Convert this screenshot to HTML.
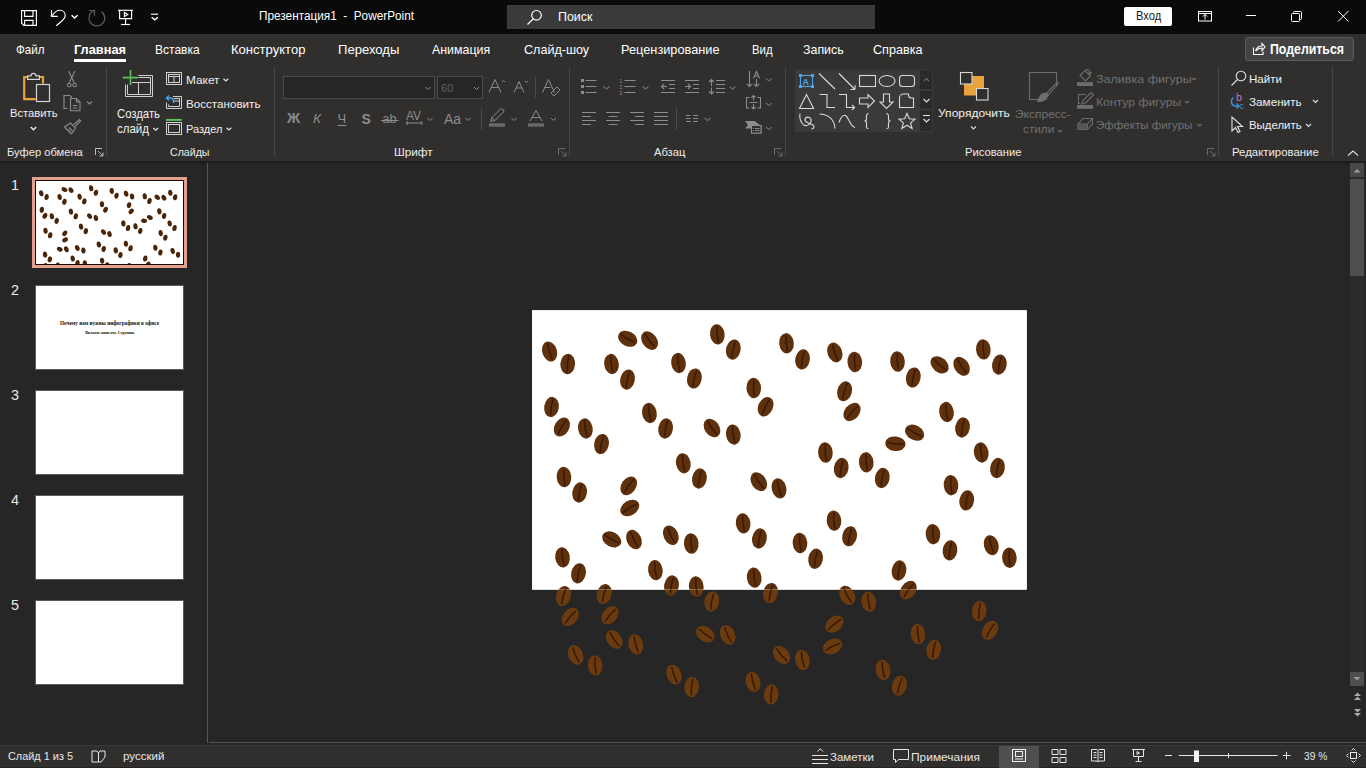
<!DOCTYPE html>
<html><head><meta charset="utf-8"><title>PowerPoint</title>
<style>
html,body{margin:0;padding:0;width:1366px;height:768px;overflow:hidden;background:#262626;font-family:"Liberation Sans",sans-serif;}
.t{position:absolute;white-space:nowrap;}
.r{position:absolute;}
svg{position:absolute;left:0;top:0;}
</style></head><body>
<div class="r" style="left:0px;top:0px;width:1366px;height:34px;background:#0a0a0a;"></div><div class="r" style="left:0px;top:162px;width:1366px;height:583px;background:#262626;"></div><div class="r" style="left:0px;top:34px;width:1366px;height:127px;background:#302f2d;"></div><div class="r" style="left:0px;top:161px;width:1366px;height:2px;background:#1d1d1d;"></div><div class="r" style="left:0px;top:163px;width:1366px;height:2px;background:#222222;"></div><div class="r" style="left:0px;top:745px;width:1366px;height:23px;background:#302f2d;"></div><div class="r" style="left:507px;top:5px;width:368px;height:24px;background:#3a3a3a;"></div><div class="r" style="left:1124px;top:7px;width:48px;height:19px;background:#ffffff;border-radius:2px"></div><div class="r" style="left:74px;top:59px;width:52px;height:3px;background:#ffffff;"></div><div class="r" style="left:1245px;top:37px;width:109px;height:24px;background:#434343;border:1px solid #5a5a5a;border-radius:3px;box-sizing:border-box"></div>
<svg width="1366" height="768" viewBox="0 0 1366 768">
<g fill="none" stroke="#ffffff" stroke-width="1.15"><path d="M21.6,10.6 h14.8 v14.8 h-12.6 l-2.2,-2.2 z"/><path d="M24.6,10.6 v5.8 h8.4 v-5.8"/><path d="M24.6,25.4 v-5 h8.4 v5"/><path d="M51.5,10 v6.4 h6.3"/><path d="M52.3,15.6 C54.5,11.8 57.5,10.2 60,10.2 C63,10.2 65.2,12.6 65.2,15.6 C65.2,18 63.5,19.6 61.5,21.3 L56.3,25.8"/><path d="M71.6,15.2 l3,2.8 l3,-2.8" stroke-width="1.5"/><path d="M118,10.3 h15"/><path d="M119.6,10.3 v8.3 h12 v-8.3"/><path d="M125.6,18.6 v5.9"/><path d="M121.1,24.5 h8.9"/><path d="M124.4,12.4 v4 l3.4,-2 z"/><path d="M151,14.2 h7"/><path d="M151.6,17.3 l3.2,2.6 l3.2,-2.6" stroke-width="1.4"/></g><g fill="none" stroke="#5c5c5c" stroke-width="1.2"><path d="M101.3,11.5 A7.9,7.9 0 1 1 94.5,10.5"/><path d="M89.1,10.5 H94.5 V15.7"/></g><g fill="none" stroke="#ffffff" stroke-width="1.2"><circle cx="536.5" cy="15.3" r="4.8"/><path d="M533,19 l-5.5,5.5"/></g><g fill="none" stroke="#ffffff" stroke-width="1"><rect x="1198.5" y="11.5" width="13" height="9.5"/><path d="M1198.5,13.5 h13"/><path d="M1205,19.5 v-5 M1202.8,16.5 l2.2,-2.2 l2.2,2.2"/><path d="M1246,15.5 h10"/><rect x="1291.5" y="13.5" width="8" height="8" rx="1"/><path d="M1293.5,13.5 v-1 a1,1 0 0 1 1,-1 h6 a1,1 0 0 1 1,1 v6 a1,1 0 0 1 -1,1 h-1"/><path d="M1338,11 l10.5,10.5 M1348.5,11 l-10.5,10.5"/></g><g fill="none" stroke="#ffffff" stroke-width="1.1"><path d="M1253.5,47.5 v7 h9.5 v-3"/><path d="M1255.5,51 c1,-3 3,-5 6.5,-5 v-2.5 l3,3.5 l-3,3.5 v-2.5 c-3,0 -4.5,1 -6.5,3"/></g><g fill="none" stroke="#e8a33d" stroke-width="2.2"><path d="M27.5,77 h-3.3 v22.2 h11.5"/><path d="M39,77 h4 v6.5"/></g><g fill="none" stroke="#d4d4d4" stroke-width="1.2"><path d="M27.6,79.4 v-3.5 h3.4 a2.5,2.5 0 0 1 5,0 h3.4 v3.5 z"/><rect x="36.5" y="84.5" width="13" height="17"/></g><path d="M30.8,127 l2.7,2.7 l2.7,-2.7" fill="none" stroke="#f0f0f0" stroke-width="1.4"/><g fill="none" stroke="#8c8c8c" stroke-width="1.1"><path d="M68.5,71 L74.3,82.8 M75,71 L69.2,82.8"/><circle cx="69.3" cy="85" r="1.8"/><circle cx="74.6" cy="85" r="1.8"/><path d="M67.5,108.5 h-3.5 v-13 h6 l2,2"/><path d="M70.5,98.5 h6 l3.5,3.5 v8.8 h-9.5 z M76.5,98.5 v3.5 h3.5"/><path d="M72.8,105.5 h4.5 M72.8,108 h4.5"/><path d="M87,101.5 l2.5,2.5 l2.5,-2.5"/><path d="M73.5,125 l6,-5.5 l1.2,1.2 l-5.5,6"/><path d="M64.5,127 l6,-4 l5,5 l-4,6 z"/><path d="M67.5,129.5 l3,3 M69,127.5 l3.5,3.5"/></g><g fill="none" stroke="#bdbdbd" stroke-width="1"><path d="M95.5,155 v-6.5 h6.5"/><path d="M98,151 l5,5 M103,152.5 v3.5 h-3.5"/></g><g fill="none" stroke="#6a6a6a" stroke-width="1"><path d="M558.5,155 v-6.5 h6.5"/><path d="M561,151 l5,5 M566,152.5 v3.5 h-3.5"/></g><g fill="none" stroke="#6a6a6a" stroke-width="1"><path d="M774.5,155 v-6.5 h6.5"/><path d="M777,151 l5,5 M782,152.5 v3.5 h-3.5"/></g><g fill="none" stroke="#6a6a6a" stroke-width="1"><path d="M1207.5,155 v-6.5 h6.5"/><path d="M1210,151 l5,5 M1215,152.5 v3.5 h-3.5"/></g><path d="M535.5,77 v20.5 M481.5,108.5 v21.5 M676.5,108 v22" stroke="#4c4c4c" stroke-width="1"/><path d="M106.5,67 V156" stroke="#464646" stroke-width="1"/><path d="M274.5,67 V156" stroke="#464646" stroke-width="1"/><path d="M569.5,67 V156" stroke="#464646" stroke-width="1"/><path d="M785.5,67 V156" stroke="#464646" stroke-width="1"/><path d="M1218.5,67 V156" stroke="#464646" stroke-width="1"/><path d="M1332.5,67 V156" stroke="#464646" stroke-width="1"/><g fill="none" stroke="#d0d0d0" stroke-width="1"><path d="M138.5,75.5 h14 v21 h-27 v-12"/><path d="M138.5,77.5 h12 v17 h-23 v-10"/><path d="M132,82.5 h18.5 M138.5,82.5 v12.5"/><rect x="166.5" y="72.5" width="15" height="12"/><rect x="168.5" y="74.5" width="11" height="8"/><path d="M168.5,76.5 h11 M174,76.5 v6.5"/><path d="M173,96.5 h8.5 v12 h-15 v-6"/><path d="M174,98.5 h5.5 v8 h-11 v-2"/><path d="M174,101 h5.5"/><rect x="166.5" y="122.5" width="15" height="12"/><rect x="168.5" y="124.5" width="11" height="8"/></g><path d="M130.5,70 v15 M122.8,77.6 h15.3" stroke="#5cc15c" stroke-width="1.6"/><path d="M153.3,128 l2.4,2.2 l2.4,-2.2" fill="none" stroke="#e0e0e0" stroke-width="1.2"/><path d="M169,95.5 l-2.5,2.5 l2.5,2.5 M167,98 h3.5 a3,3 0 0 1 3,3 v2" fill="none" stroke="#4aa3e8" stroke-width="1.5"/><path d="M166,119.9 h15.7" stroke="#5cc15c" stroke-width="2"/><path d="M223.5,78.8 l2.4,2.2 l2.4,-2.2 M226.5,127.8 l2.4,2.2 l2.4,-2.2" fill="none" stroke="#e0e0e0" stroke-width="1.2"/><rect x="283.5" y="76.5" width="151" height="22" fill="#262626" stroke="#4a4a4a"/><rect x="437.5" y="76.5" width="45" height="22" fill="#262626" stroke="#4a4a4a"/><g fill="none" stroke="#8c8c8c" stroke-width="1"><path d="M425.5,87 l2.5,2.5 l2.5,-2.5 M474,87 l2.5,2.5 l2.5,-2.5"/><path d="M489,92.5 l6,-13 l6,13 M491.5,87.5 h7 M502,82 l1.5,-1.5 l1.5,1.5"/><path d="M514,92.5 l5,-11 l5,11 M516,88 h6 M525,81 l1.5,1.5 l1.5,-1.5"/><path d="M542.5,92.5 l6,-13 l6,13 M544.5,87.5 h6 M551,93 l6,-6 l3,3 l-6,6 z"/><path d="M427.5,118 l2.5,2.5 l2.5,-2.5 M465.5,118 l2.5,2.5 l2.5,-2.5 M511.5,118 l2.5,2.5 l2.5,-2.5 M551,118 l2.5,2.5 l2.5,-2.5"/><path d="M337.5,125.5 h9"/><path d="M381,120.5 h17.5"/><path d="M406,123 h16.5 M408,121 l-2,2 l2,2 M420.5,121 l2,2 l-2,2"/><path d="M490.5,121.5 l1.5,-4 l8.5,-8.5 a1.5,1.5 0 0 1 2,0 l1,1 a1.5,1.5 0 0 1 0,2 l-8.5,8.5 z M492,117.5 l3,3"/><path d="M530,121 l6,-10.5 l6,10.5 M532,117.5 h8"/></g><rect x="489" y="123.3" width="16" height="3.4" fill="#6a6a6a"/><rect x="528" y="123.3" width="16" height="3.4" fill="#6a6a6a"/><g font-family="Liberation Sans" fill="#8c8c8c"><text x="287" y="123.2" font-size="14.5" font-weight="700">Ж</text><text x="313" y="123.2" font-size="13.5" font-style="italic">К</text><text x="337.5" y="122.8" font-size="13">Ч</text><text x="361.5" y="123.5" font-size="14" font-weight="700">S</text><text x="382.5" y="123.3" font-size="12.5">ab</text><text x="406" y="119.8" font-size="12">AV</text><text x="444" y="124" font-size="14">Aa</text></g><g fill="none" stroke="#8c8c8c" stroke-width="1.1"><path d="M585.5,80.5 h11 M585.5,86.5 h11 M585.5,92.5 h11"/><path d="M624.5,80.5 h11 M624.5,86.5 h11 M624.5,92.5 h11"/><path d="M661,80.5 h14 M669,84.5 h6 M669,88.5 h6 M661,92.5 h14 M667,86.5 h-5.5 M664,84 l-2.5,2.5 l2.5,2.5"/><path d="M685,80.5 h14 M693,84.5 h6 M693,88.5 h6 M685,92.5 h14 M685,86.5 h5.5 M688,84 l2.5,2.5 l-2.5,2.5"/><path d="M716,80.5 h9 M716,84.5 h9 M716,88.5 h9 M716,92.5 h9 M711.5,79.5 v6.5 M709,82 l2.5,-2.5 l2.5,2.5 M711.5,87.5 v6.5 M709,91.5 l2.5,2.5 l2.5,-2.5"/><path d="M603.5,86.5 l3,2.5 l3,-2.5 M642.5,86.5 l3,2.5 l3,-2.5 M729.5,86.5 l3,2.5 l3,-2.5 M704.5,118 l3,2.5 l3,-2.5" stroke="#6e6e6e"/><path d="M749.5,71 v15.5 M746.8,83.8 l2.7,2.7 l2.7,-2.7 M756.5,79 v7.5 M753.8,83.8 l2.7,2.7 l2.7,-2.7 M753.5,78.5 l3,-7 l3,7 M754.5,76 h4"/><path d="M766,78.5 l3,2.5 l3,-2.5 M766,103 l3,2.5 l3,-2.5 M766,127 l3,2.5 l3,-2.5" stroke="#6a6a6a"/><path d="M749.5,97.5 h-3 v10.5 h3 M757.5,97.5 h3 v10.5 h-3 M749.5,102.5 h8 M753.5,95.5 v5 M751.5,97.5 l2,-2 l2,2 M753.5,104 v5 M751.5,107 l2,2 l2,-2"/><rect x="751.5" y="125.5" width="9.5" height="7.5"/><path d="M755,128.5 h4.5 M755,130.5 h4.5 M753,128.5 h1 M753,130.5 h1"/><path d="M582,112.5 h14 M582,116.5 h9 M582,120.5 h14 M582,124.5 h9"/><path d="M606,112.5 h14 M608.5,116.5 h9 M606,120.5 h14 M608.5,124.5 h9"/><path d="M630,112.5 h14 M635,116.5 h9 M630,120.5 h14 M635,124.5 h9"/><path d="M654,112.5 h14 M654,116.5 h14 M654,120.5 h14 M654,124.5 h14"/><path d="M686,115.5 h4.5 M686,118.5 h4.5 M686,121.5 h4.5 M693,115.5 h5 M693,118.5 h5 M693,121.5 h5"/></g><g fill="#8c8c8c"><rect x="581" y="79" width="3" height="3"/><rect x="581" y="85" width="3" height="3"/><rect x="581" y="91" width="3" height="3"/><path d="M745,121 h9.5 l5.5,4 h-8.5 v3.5 h-6.5 l3,-3.5 z"/><rect x="751.5" y="125.5" width="9.5" height="7.5" fill="#302f2d" stroke="#8c8c8c"/><path d="M755,128.5 h4.5 M755,130.5 h4.5 M753,128.5 h1 M753,130.5 h1" stroke="#8c8c8c"/></g><g fill="#8c8c8c" font-family="Liberation Sans" font-size="5"><text x="619.5" y="82.5">1</text><text x="619.5" y="88.5">2</text><text x="619.5" y="94.5">3</text></g><rect x="795" y="69.5" width="124" height="62.5" fill="#3a3a3a"/><rect x="919" y="69.5" width="14" height="62.5" fill="#3a3a3a"/><rect x="920" y="70.5" width="12" height="18.5" fill="#2a2a2a"/><rect x="920" y="91" width="12" height="17.5" fill="#2a2a2a"/><rect x="920" y="110.5" width="12" height="20.5" fill="#2a2a2a"/><g fill="none" stroke-width="1.1"><path d="M924,81 l2.5,-2.5 l2.5,2.5" stroke="#6a6a6a"/><path d="M923.5,99 l3,3 l3,-3" stroke="#e0e0e0"/><path d="M923,115.5 h7 M923.5,119 l3,3 l3,-3" stroke="#e0e0e0"/></g><g fill="none" stroke="#d8d8d8" stroke-width="1.1"><path d="M819,73.5 l16,15.5 M839,73.5 l15.5,15.5 M855,89.5 h-4.5 M855,89.5 v-4.5"/><rect x="859.5" y="75.5" width="16" height="11"/><ellipse cx="887" cy="81" rx="8" ry="5.5"/><rect x="899.5" y="75.5" width="15" height="11" rx="3"/><path d="M799.5,108.5 l7,-14 l7,14 z"/><path d="M819.5,94.5 h7.5 v13 h8"/><path d="M839,94.5 h7.5 v13 h8 M852,105 l2.5,2.5 l-2.5,2.5"/><path d="M859.5,98 h8.5 v-3.5 l6.5,6.5 l-6.5,6.5 v-3.5 h-8.5 z"/><path d="M883.5,94 h6 v8 h3.5 l-6.5,6.5 l-6.5,-6.5 h3.5 z"/><path d="M899.5,107.5 v-9.5 a4,4 0 0 1 4,-4 h5 l0,1 a3,3 0 0 0 3,3 h2 v9.5 z"/><path d="M800,113.5 C799,118 801,123 804,125 C807,127 812,123 811,119.5 C810,116 805,116.5 805,120 C805,123 811,123.5 813,125 C815,126.5 814,129 811.5,129"/><path d="M819.5,114 c8,0 15,5 15.5,14.5"/><path d="M839,122.5 c1.5,-5 4,-8 6.5,-7 c3,1.5 4.5,11 9.5,12"/><path d="M868.5,113.5 c-2,0 -2,1 -2,3 v2.5 c0,1 -1,2 -2,2 c1,0 2,1 2,2 v3 c0,2 0,2.5 2,2.5"/><path d="M886.5,113.5 c2,0 2,1 2,3 v2.5 c0,1 1,2 2,2 c-1,0 -2,1 -2,2 v3 c0,2 0,2.5 -2,2.5"/><path d="M907,113.5 l2.3,5.3 l5.7,0.4 l-4.4,3.7 l1.5,5.6 l-5.1,-3.3 l-5.1,3.3 l1.5,-5.6 l-4.4,-3.7 l5.7,-0.4 z"/></g><g fill="none" stroke="#4aa3e8" stroke-width="1.1"><rect x="800.5" y="75.5" width="12" height="11"/></g><g fill="#4aa3e8"><rect x="799" y="74" width="3" height="3"/><rect x="811" y="74" width="3" height="3"/><rect x="799" y="85" width="3" height="3"/><rect x="811" y="85" width="3" height="3"/><text x="802.5" y="85" font-family="Liberation Sans" font-size="9" font-weight="700">A</text></g><rect x="964" y="76" width="20" height="19.5" fill="#e8a33d"/><g fill="#2e2e2e" stroke="#d8d8d8" stroke-width="1.1"><rect x="960.5" y="72.5" width="11.5" height="11.5"/><rect x="976.5" y="88.5" width="11.5" height="11.5"/></g><path d="M971,126.5 l2.5,2.5 l2.5,-2.5" fill="none" stroke="#e0e0e0" stroke-width="1.1"/><g fill="none" stroke="#6e6e6e" stroke-width="1.1"><path d="M1045,99.5 h-15.5 v-27 h27 v14"/><path d="M1056.5,83 c1,-1 2.5,0 1.5,1 l-9.5,11 l-2,-1.5 z"/><path d="M1046.5,93.5 c-3,-1 -6,1 -7,4 l-2,4 c3,0 7,-1 9,-3 l1.5,-3.5" fill="#6e6e6e"/><path d="M1058,130 l2,2 l2,-2 M1192,78 l2,2 l2,-2 M1185,101 l2,2 l2,-2 M1197.5,124 l2,2 l2,-2"/><path d="M1080,75.5 l5,-5 l5.5,5.5 l-5,5 z"/><path d="M1085.5,70.5 l1,-1 c2,0 3.5,1 3.5,3 v2 M1090,74 l1.5,-1.5 M1090,74 l-1.5,-1.2"/><path d="M1086,94.5 h-7.5 v9 h2"/><path d="M1082,104 l1,-3.5 l8,-8 l2.5,2.5 l-8,8 z"/><path d="M1078,124 l5,-5.5 h9.5 l0,5.5 l-5,5.5 h-9.5 z M1078,124 h9.5 l5,-5.5 M1087.5,124 v5.5"/></g><rect x="1077" y="82.2" width="16" height="3.8" fill="#6e6e6e"/><rect x="1077" y="105" width="16" height="3.8" fill="#6e6e6e"/><path d="M1078.5,124.5 h9 v5 h-9 z" fill="#555"/><g fill="none" stroke="#e0e0e0" stroke-width="1.1"><circle cx="1241" cy="76" r="4.8"/><path d="M1237.5,79.5 l-6,6"/><path d="M1232,117 v14 l3.5,-3.5 l2.5,5 l2,-1 l-2.5,-5 h5 z"/><path d="M1313,100 l2.5,2.5 l2.5,-2.5 M1306,124 l2.5,2.5 l2.5,-2.5"/><path d="M1348,155.5 l5,-4.5 l5,4.5"/></g><g fill="none" stroke="#3d8fd1" stroke-width="1.4"><path d="M1233.5,97.5 c-3,2 -3,7.5 1.5,8.5 h3 M1236.5,103.5 l2.5,2.5 l-2.5,2.5"/></g><text x="1236" y="101.3" font-family="Liberation Sans" font-size="10.5" fill="#c774c6">b</text><text x="1239.3" y="108.8" font-family="Liberation Sans" font-size="9.5" fill="#3d8fd1">c</text><path d="M207.5,163 V743" stroke="#555555" stroke-width="1"/><path d="M209,742.5 H1366" stroke="#555555" stroke-width="1"/><rect x="0" y="745" width="1366" height="1" fill="#3a3a3a"/><rect x="0" y="767" width="1366" height="1" fill="#222222"/><rect x="1350" y="163" width="14" height="523" fill="#2b2b2b"/><rect x="1350" y="163" width="14" height="14" fill="#474747"/><path d="M1353.5,172.5 l3.5,-3.5 l3.5,3.5 z" fill="#9a9a9a"/><rect x="1350" y="179" width="14" height="97" fill="#4f4f4f"/><rect x="1350" y="672" width="14" height="14" fill="#4e4e4e"/><path d="M1353.5,677 l3.5,3.5 l3.5,-3.5 z" fill="#9a9a9a"/><g fill="#a8a8a8"><path d="M1354,696 l3.5,-3.5 l3.5,3.5 z M1354,700 l3.5,-3.5 l3.5,3.5 z"/><path d="M1354,709 l3.5,3.5 l3.5,-3.5 z M1354,713 l3.5,3.5 l3.5,-3.5 z"/></g><g fill="none" stroke="#e6e6e6" stroke-width="1"><path d="M92,751 h5 l1.5,2 l1.5,-2 h5 v6 l-4,5 h-9 z M98.5,753 v9"/><path d="M812,755.5 h16 M812,759.5 h16 M812,763.5 h16 M817.5,751.5 l2.8,-2.8 l2.8,2.8"/><path d="M893.5,749.5 h15 v10 h-10 l-3,3 v-3 h-2 z"/><path d="M1052,749.5 h6 v5 h-6 z M1060,749.5 h6 v5 h-6 z M1052,757.5 h6 v5 h-6 z M1060,757.5 h6 v5 h-6 z"/><path d="M1091.5,749.5 h5.5 l1,1 l1,-1 h5.5 v11.5 h-5.5 l-1,1 l-1,-1 h-5.5 z M1098,750.5 v11"/><path d="M1093.5,752.5 h3 M1093.5,755 h3 M1093.5,757.5 h3 M1099.5,752.5 h3 M1099.5,755 h3 M1099.5,757.5 h3"/><path d="M1132,749.5 h13 M1133.5,749.5 v7 h10 v-7 M1138.5,756.5 v4.5 M1135.5,761.5 h6 M1137,751.5 v3 l2.5,-1.5 z"/><path d="M1165,755.5 h7 M1283,755.5 h7.5 M1286.5,751.8 v7.5"/><rect x="1350.5" y="752.5" width="6" height="6"/><path d="M1351.5,750.5 l2,-2 l2,2 M1351.5,760.5 l2,2 l2,-2 M1348.5,753.5 l-2,2 l2,2 M1358.5,753.5 l2,2 l-2,2"/></g><rect x="999" y="746" width="40" height="22" fill="#4f4f4f"/><g fill="none" stroke="#f0f0f0" stroke-width="1"><rect x="1012.5" y="749.5" width="13" height="12"/><rect x="1015.5" y="751.5" width="7" height="5"/><path d="M1015,759 h8"/></g><path d="M1178.8,755.5 H1277.6" stroke="#e4e4e4" stroke-width="1"/><path d="M1228.5,753 v5" stroke="#e4e4e4"/><rect x="1194" y="750.5" width="5" height="11.5" fill="#f4f4f4"/><rect x="33.5" y="178.5" width="152" height="88" fill="none" stroke="#e59f8f" stroke-width="3"/><rect x="35" y="180" width="149" height="85" fill="#1a0a05"/><rect x="36" y="181" width="147" height="83" fill="#ffffff"/><rect x="36" y="286" width="147" height="83" fill="#ffffff"/><rect x="36" y="391" width="147" height="83" fill="#ffffff"/><rect x="36" y="496" width="147" height="83" fill="#ffffff"/><rect x="36" y="601" width="147" height="83" fill="#ffffff"/><rect x="35.5" y="285.5" width="148" height="84" fill="none" stroke="#5a5a5a" stroke-width="1"/><rect x="35.5" y="390.5" width="148" height="84" fill="none" stroke="#5a5a5a" stroke-width="1"/><rect x="35.5" y="495.5" width="148" height="84" fill="none" stroke="#5a5a5a" stroke-width="1"/><rect x="35.5" y="600.5" width="148" height="84" fill="none" stroke="#5a5a5a" stroke-width="1"/><text x="60" y="324.6" textLength="99" lengthAdjust="spacingAndGlyphs" font-family="Liberation Serif" font-size="5.4" font-weight="700" fill="#111">Почему нам нужны инфографики в офисе</text><text x="85.2" y="333.6" textLength="49" lengthAdjust="spacingAndGlyphs" font-family="Liberation Serif" font-size="5" font-weight="700" fill="#111">Вильям записать 3 группы</text><defs><clipPath id="cs"><rect x="532.2" y="310.3" width="494.5" height="279.3"/></clipPath><clipPath id="ct"><rect x="36" y="181" width="147" height="83"/></clipPath><g id="beans"><g transform="translate(549.6,351.5) rotate(-18)"><ellipse rx="7.3" ry="10.2" fill="currentColor"/><path d="M0.5,-8.3 Q-0.9,0 0.3,8.3" fill="none" stroke="#2e1503" stroke-width="1.5"/></g><g transform="translate(567.7,364) rotate(5)"><ellipse rx="7.3" ry="10.2" fill="currentColor"/><path d="M0.5,-8.3 Q-0.9,0 0.3,8.3" fill="none" stroke="#2e1503" stroke-width="1.5"/></g><g transform="translate(627.7,338.8) rotate(-62)"><ellipse rx="7.3" ry="10.2" fill="currentColor"/><path d="M0.5,-8.3 Q-0.9,0 0.3,8.3" fill="none" stroke="#2e1503" stroke-width="1.5"/></g><g transform="translate(649.6,340.6) rotate(-37)"><ellipse rx="7.3" ry="10.2" fill="currentColor"/><path d="M0.5,-8.3 Q-0.9,0 0.3,8.3" fill="none" stroke="#2e1503" stroke-width="1.5"/></g><g transform="translate(611.5,364) rotate(-8)"><ellipse rx="7.3" ry="10.2" fill="currentColor"/><path d="M0.5,-8.3 Q-0.9,0 0.3,8.3" fill="none" stroke="#2e1503" stroke-width="1.5"/></g><g transform="translate(627.5,379.6) rotate(12)"><ellipse rx="7.3" ry="10.2" fill="currentColor"/><path d="M0.5,-8.3 Q-0.9,0 0.3,8.3" fill="none" stroke="#2e1503" stroke-width="1.5"/></g><g transform="translate(717.3,334.4) rotate(-8)"><ellipse rx="7.3" ry="10.2" fill="currentColor"/><path d="M0.5,-8.3 Q-0.9,0 0.3,8.3" fill="none" stroke="#2e1503" stroke-width="1.5"/></g><g transform="translate(733.3,349.6) rotate(12)"><ellipse rx="7.3" ry="10.2" fill="currentColor"/><path d="M0.5,-8.3 Q-0.9,0 0.3,8.3" fill="none" stroke="#2e1503" stroke-width="1.5"/></g><g transform="translate(678.5,363) rotate(-8)"><ellipse rx="7.3" ry="10.2" fill="currentColor"/><path d="M0.5,-8.3 Q-0.9,0 0.3,8.3" fill="none" stroke="#2e1503" stroke-width="1.5"/></g><g transform="translate(694.4,378.5) rotate(12)"><ellipse rx="7.3" ry="10.2" fill="currentColor"/><path d="M0.5,-8.3 Q-0.9,0 0.3,8.3" fill="none" stroke="#2e1503" stroke-width="1.5"/></g><g transform="translate(753.75,388) rotate(-3)"><ellipse rx="7.3" ry="10.2" fill="currentColor"/><path d="M0.5,-8.3 Q-0.9,0 0.3,8.3" fill="none" stroke="#2e1503" stroke-width="1.5"/></g><g transform="translate(765.6,406.7) rotate(25)"><ellipse rx="7.3" ry="10.2" fill="currentColor"/><path d="M0.5,-8.3 Q-0.9,0 0.3,8.3" fill="none" stroke="#2e1503" stroke-width="1.5"/></g><g transform="translate(551.5,407) rotate(8)"><ellipse rx="7.3" ry="10.2" fill="currentColor"/><path d="M0.5,-8.3 Q-0.9,0 0.3,8.3" fill="none" stroke="#2e1503" stroke-width="1.5"/></g><g transform="translate(561.9,427) rotate(30)"><ellipse rx="7.3" ry="10.2" fill="currentColor"/><path d="M0.5,-8.3 Q-0.9,0 0.3,8.3" fill="none" stroke="#2e1503" stroke-width="1.5"/></g><g transform="translate(585.4,428.5) rotate(-10)"><ellipse rx="7.3" ry="10.2" fill="currentColor"/><path d="M0.5,-8.3 Q-0.9,0 0.3,8.3" fill="none" stroke="#2e1503" stroke-width="1.5"/></g><g transform="translate(601.5,444) rotate(12)"><ellipse rx="7.3" ry="10.2" fill="currentColor"/><path d="M0.5,-8.3 Q-0.9,0 0.3,8.3" fill="none" stroke="#2e1503" stroke-width="1.5"/></g><g transform="translate(649.4,413) rotate(-10)"><ellipse rx="7.3" ry="10.2" fill="currentColor"/><path d="M0.5,-8.3 Q-0.9,0 0.3,8.3" fill="none" stroke="#2e1503" stroke-width="1.5"/></g><g transform="translate(665.6,428.5) rotate(10)"><ellipse rx="7.3" ry="10.2" fill="currentColor"/><path d="M0.5,-8.3 Q-0.9,0 0.3,8.3" fill="none" stroke="#2e1503" stroke-width="1.5"/></g><g transform="translate(712,428) rotate(-35)"><ellipse rx="7.3" ry="10.2" fill="currentColor"/><path d="M0.5,-8.3 Q-0.9,0 0.3,8.3" fill="none" stroke="#2e1503" stroke-width="1.5"/></g><g transform="translate(733.3,434.6) rotate(-10)"><ellipse rx="7.3" ry="10.2" fill="currentColor"/><path d="M0.5,-8.3 Q-0.9,0 0.3,8.3" fill="none" stroke="#2e1503" stroke-width="1.5"/></g><g transform="translate(786.5,343.3) rotate(-5)"><ellipse rx="7.3" ry="10.2" fill="currentColor"/><path d="M0.5,-8.3 Q-0.9,0 0.3,8.3" fill="none" stroke="#2e1503" stroke-width="1.5"/></g><g transform="translate(802.5,359.4) rotate(10)"><ellipse rx="7.3" ry="10.2" fill="currentColor"/><path d="M0.5,-8.3 Q-0.9,0 0.3,8.3" fill="none" stroke="#2e1503" stroke-width="1.5"/></g><g transform="translate(834.8,352.5) rotate(-20)"><ellipse rx="7.3" ry="10.2" fill="currentColor"/><path d="M0.5,-8.3 Q-0.9,0 0.3,8.3" fill="none" stroke="#2e1503" stroke-width="1.5"/></g><g transform="translate(854.8,362) rotate(-5)"><ellipse rx="7.3" ry="10.2" fill="currentColor"/><path d="M0.5,-8.3 Q-0.9,0 0.3,8.3" fill="none" stroke="#2e1503" stroke-width="1.5"/></g><g transform="translate(897.5,361.5) rotate(-5)"><ellipse rx="7.3" ry="10.2" fill="currentColor"/><path d="M0.5,-8.3 Q-0.9,0 0.3,8.3" fill="none" stroke="#2e1503" stroke-width="1.5"/></g><g transform="translate(913.3,377.5) rotate(12)"><ellipse rx="7.3" ry="10.2" fill="currentColor"/><path d="M0.5,-8.3 Q-0.9,0 0.3,8.3" fill="none" stroke="#2e1503" stroke-width="1.5"/></g><g transform="translate(939.6,364.8) rotate(-50)"><ellipse rx="7.3" ry="10.2" fill="currentColor"/><path d="M0.5,-8.3 Q-0.9,0 0.3,8.3" fill="none" stroke="#2e1503" stroke-width="1.5"/></g><g transform="translate(961.6,366.3) rotate(-33)"><ellipse rx="7.3" ry="10.2" fill="currentColor"/><path d="M0.5,-8.3 Q-0.9,0 0.3,8.3" fill="none" stroke="#2e1503" stroke-width="1.5"/></g><g transform="translate(983.3,349.4) rotate(-5)"><ellipse rx="7.3" ry="10.2" fill="currentColor"/><path d="M0.5,-8.3 Q-0.9,0 0.3,8.3" fill="none" stroke="#2e1503" stroke-width="1.5"/></g><g transform="translate(999.4,364.6) rotate(10)"><ellipse rx="7.3" ry="10.2" fill="currentColor"/><path d="M0.5,-8.3 Q-0.9,0 0.3,8.3" fill="none" stroke="#2e1503" stroke-width="1.5"/></g><g transform="translate(844.6,391.25) rotate(15)"><ellipse rx="7.3" ry="10.2" fill="currentColor"/><path d="M0.5,-8.3 Q-0.9,0 0.3,8.3" fill="none" stroke="#2e1503" stroke-width="1.5"/></g><g transform="translate(852,412) rotate(40)"><ellipse rx="7.3" ry="10.2" fill="currentColor"/><path d="M0.5,-8.3 Q-0.9,0 0.3,8.3" fill="none" stroke="#2e1503" stroke-width="1.5"/></g><g transform="translate(946.5,412) rotate(-8)"><ellipse rx="7.3" ry="10.2" fill="currentColor"/><path d="M0.5,-8.3 Q-0.9,0 0.3,8.3" fill="none" stroke="#2e1503" stroke-width="1.5"/></g><g transform="translate(962.5,427.5) rotate(10)"><ellipse rx="7.3" ry="10.2" fill="currentColor"/><path d="M0.5,-8.3 Q-0.9,0 0.3,8.3" fill="none" stroke="#2e1503" stroke-width="1.5"/></g><g transform="translate(914.6,432.7) rotate(-61)"><ellipse rx="7.3" ry="10.2" fill="currentColor"/><path d="M0.5,-8.3 Q-0.9,0 0.3,8.3" fill="none" stroke="#2e1503" stroke-width="1.5"/></g><g transform="translate(895.4,443.75) rotate(-84)"><ellipse rx="7.3" ry="10.2" fill="currentColor"/><path d="M0.5,-8.3 Q-0.9,0 0.3,8.3" fill="none" stroke="#2e1503" stroke-width="1.5"/></g><g transform="translate(564,477) rotate(-5)"><ellipse rx="7.3" ry="10.2" fill="currentColor"/><path d="M0.5,-8.3 Q-0.9,0 0.3,8.3" fill="none" stroke="#2e1503" stroke-width="1.5"/></g><g transform="translate(579.6,492.5) rotate(10)"><ellipse rx="7.3" ry="10.2" fill="currentColor"/><path d="M0.5,-8.3 Q-0.9,0 0.3,8.3" fill="none" stroke="#2e1503" stroke-width="1.5"/></g><g transform="translate(628.75,485.8) rotate(35)"><ellipse rx="7.3" ry="10.2" fill="currentColor"/><path d="M0.5,-8.3 Q-0.9,0 0.3,8.3" fill="none" stroke="#2e1503" stroke-width="1.5"/></g><g transform="translate(629.8,508) rotate(58)"><ellipse rx="7.3" ry="10.2" fill="currentColor"/><path d="M0.5,-8.3 Q-0.9,0 0.3,8.3" fill="none" stroke="#2e1503" stroke-width="1.5"/></g><g transform="translate(683.3,463.3) rotate(-10)"><ellipse rx="7.3" ry="10.2" fill="currentColor"/><path d="M0.5,-8.3 Q-0.9,0 0.3,8.3" fill="none" stroke="#2e1503" stroke-width="1.5"/></g><g transform="translate(699.4,478.5) rotate(10)"><ellipse rx="7.3" ry="10.2" fill="currentColor"/><path d="M0.5,-8.3 Q-0.9,0 0.3,8.3" fill="none" stroke="#2e1503" stroke-width="1.5"/></g><g transform="translate(758.75,481.7) rotate(-35)"><ellipse rx="7.3" ry="10.2" fill="currentColor"/><path d="M0.5,-8.3 Q-0.9,0 0.3,8.3" fill="none" stroke="#2e1503" stroke-width="1.5"/></g><g transform="translate(779,488.4) rotate(-15)"><ellipse rx="7.3" ry="10.2" fill="currentColor"/><path d="M0.5,-8.3 Q-0.9,0 0.3,8.3" fill="none" stroke="#2e1503" stroke-width="1.5"/></g><g transform="translate(743.1,523.3) rotate(-8)"><ellipse rx="7.3" ry="10.2" fill="currentColor"/><path d="M0.5,-8.3 Q-0.9,0 0.3,8.3" fill="none" stroke="#2e1503" stroke-width="1.5"/></g><g transform="translate(759.4,538.5) rotate(10)"><ellipse rx="7.3" ry="10.2" fill="currentColor"/><path d="M0.5,-8.3 Q-0.9,0 0.3,8.3" fill="none" stroke="#2e1503" stroke-width="1.5"/></g><g transform="translate(611.7,539.4) rotate(-61)"><ellipse rx="7.3" ry="10.2" fill="currentColor"/><path d="M0.5,-8.3 Q-0.9,0 0.3,8.3" fill="none" stroke="#2e1503" stroke-width="1.5"/></g><g transform="translate(634,539.6) rotate(-25)"><ellipse rx="7.3" ry="10.2" fill="currentColor"/><path d="M0.5,-8.3 Q-0.9,0 0.3,8.3" fill="none" stroke="#2e1503" stroke-width="1.5"/></g><g transform="translate(670.8,535.2) rotate(-25)"><ellipse rx="7.3" ry="10.2" fill="currentColor"/><path d="M0.5,-8.3 Q-0.9,0 0.3,8.3" fill="none" stroke="#2e1503" stroke-width="1.5"/></g><g transform="translate(691.25,543.5) rotate(-5)"><ellipse rx="7.3" ry="10.2" fill="currentColor"/><path d="M0.5,-8.3 Q-0.9,0 0.3,8.3" fill="none" stroke="#2e1503" stroke-width="1.5"/></g><g transform="translate(562.5,557.3) rotate(-8)"><ellipse rx="7.3" ry="10.2" fill="currentColor"/><path d="M0.5,-8.3 Q-0.9,0 0.3,8.3" fill="none" stroke="#2e1503" stroke-width="1.5"/></g><g transform="translate(578.5,573.3) rotate(12)"><ellipse rx="7.3" ry="10.2" fill="currentColor"/><path d="M0.5,-8.3 Q-0.9,0 0.3,8.3" fill="none" stroke="#2e1503" stroke-width="1.5"/></g><g transform="translate(655.4,570.2) rotate(-8)"><ellipse rx="7.3" ry="10.2" fill="currentColor"/><path d="M0.5,-8.3 Q-0.9,0 0.3,8.3" fill="none" stroke="#2e1503" stroke-width="1.5"/></g><g transform="translate(671.5,585.5) rotate(10)"><ellipse rx="7.3" ry="10.2" fill="currentColor"/><path d="M0.5,-8.3 Q-0.9,0 0.3,8.3" fill="none" stroke="#2e1503" stroke-width="1.5"/></g><g transform="translate(696.25,586.5) rotate(-5)"><ellipse rx="7.3" ry="10.2" fill="currentColor"/><path d="M0.5,-8.3 Q-0.9,0 0.3,8.3" fill="none" stroke="#2e1503" stroke-width="1.5"/></g><g transform="translate(754.2,577.7) rotate(-8)"><ellipse rx="7.3" ry="10.2" fill="currentColor"/><path d="M0.5,-8.3 Q-0.9,0 0.3,8.3" fill="none" stroke="#2e1503" stroke-width="1.5"/></g><g transform="translate(770.5,593) rotate(12)"><ellipse rx="7.3" ry="10.2" fill="currentColor"/><path d="M0.5,-8.3 Q-0.9,0 0.3,8.3" fill="none" stroke="#2e1503" stroke-width="1.5"/></g><g transform="translate(563.5,596) rotate(15)"><ellipse rx="7.3" ry="10.2" fill="currentColor"/><path d="M0.5,-8.3 Q-0.9,0 0.3,8.3" fill="none" stroke="#2e1503" stroke-width="1.5"/></g><g transform="translate(604.2,594) rotate(15)"><ellipse rx="7.3" ry="10.2" fill="currentColor"/><path d="M0.5,-8.3 Q-0.9,0 0.3,8.3" fill="none" stroke="#2e1503" stroke-width="1.5"/></g><g transform="translate(711.8,601.5) rotate(10)"><ellipse rx="7.3" ry="10.2" fill="currentColor"/><path d="M0.5,-8.3 Q-0.9,0 0.3,8.3" fill="none" stroke="#2e1503" stroke-width="1.5"/></g><g transform="translate(825.4,452.5) rotate(-5)"><ellipse rx="7.3" ry="10.2" fill="currentColor"/><path d="M0.5,-8.3 Q-0.9,0 0.3,8.3" fill="none" stroke="#2e1503" stroke-width="1.5"/></g><g transform="translate(841.25,468) rotate(10)"><ellipse rx="7.3" ry="10.2" fill="currentColor"/><path d="M0.5,-8.3 Q-0.9,0 0.3,8.3" fill="none" stroke="#2e1503" stroke-width="1.5"/></g><g transform="translate(866.25,462.3) rotate(-5)"><ellipse rx="7.3" ry="10.2" fill="currentColor"/><path d="M0.5,-8.3 Q-0.9,0 0.3,8.3" fill="none" stroke="#2e1503" stroke-width="1.5"/></g><g transform="translate(882.3,478) rotate(10)"><ellipse rx="7.3" ry="10.2" fill="currentColor"/><path d="M0.5,-8.3 Q-0.9,0 0.3,8.3" fill="none" stroke="#2e1503" stroke-width="1.5"/></g><g transform="translate(981.25,452.5) rotate(-10)"><ellipse rx="7.3" ry="10.2" fill="currentColor"/><path d="M0.5,-8.3 Q-0.9,0 0.3,8.3" fill="none" stroke="#2e1503" stroke-width="1.5"/></g><g transform="translate(997.5,468) rotate(10)"><ellipse rx="7.3" ry="10.2" fill="currentColor"/><path d="M0.5,-8.3 Q-0.9,0 0.3,8.3" fill="none" stroke="#2e1503" stroke-width="1.5"/></g><g transform="translate(951,485.2) rotate(-5)"><ellipse rx="7.3" ry="10.2" fill="currentColor"/><path d="M0.5,-8.3 Q-0.9,0 0.3,8.3" fill="none" stroke="#2e1503" stroke-width="1.5"/></g><g transform="translate(966.7,500.4) rotate(10)"><ellipse rx="7.3" ry="10.2" fill="currentColor"/><path d="M0.5,-8.3 Q-0.9,0 0.3,8.3" fill="none" stroke="#2e1503" stroke-width="1.5"/></g><g transform="translate(834,520.6) rotate(-5)"><ellipse rx="7.3" ry="10.2" fill="currentColor"/><path d="M0.5,-8.3 Q-0.9,0 0.3,8.3" fill="none" stroke="#2e1503" stroke-width="1.5"/></g><g transform="translate(849.6,536.25) rotate(12)"><ellipse rx="7.3" ry="10.2" fill="currentColor"/><path d="M0.5,-8.3 Q-0.9,0 0.3,8.3" fill="none" stroke="#2e1503" stroke-width="1.5"/></g><g transform="translate(800,543) rotate(-5)"><ellipse rx="7.3" ry="10.2" fill="currentColor"/><path d="M0.5,-8.3 Q-0.9,0 0.3,8.3" fill="none" stroke="#2e1503" stroke-width="1.5"/></g><g transform="translate(815.6,558.75) rotate(10)"><ellipse rx="7.3" ry="10.2" fill="currentColor"/><path d="M0.5,-8.3 Q-0.9,0 0.3,8.3" fill="none" stroke="#2e1503" stroke-width="1.5"/></g><g transform="translate(933,534.2) rotate(-5)"><ellipse rx="7.3" ry="10.2" fill="currentColor"/><path d="M0.5,-8.3 Q-0.9,0 0.3,8.3" fill="none" stroke="#2e1503" stroke-width="1.5"/></g><g transform="translate(950,550.4) rotate(8)"><ellipse rx="7.3" ry="10.2" fill="currentColor"/><path d="M0.5,-8.3 Q-0.9,0 0.3,8.3" fill="none" stroke="#2e1503" stroke-width="1.5"/></g><g transform="translate(991.25,545.2) rotate(-15)"><ellipse rx="7.3" ry="10.2" fill="currentColor"/><path d="M0.5,-8.3 Q-0.9,0 0.3,8.3" fill="none" stroke="#2e1503" stroke-width="1.5"/></g><g transform="translate(1009.4,557.7) rotate(-3)"><ellipse rx="7.3" ry="10.2" fill="currentColor"/><path d="M0.5,-8.3 Q-0.9,0 0.3,8.3" fill="none" stroke="#2e1503" stroke-width="1.5"/></g><g transform="translate(899,570.5) rotate(10)"><ellipse rx="7.3" ry="10.2" fill="currentColor"/><path d="M0.5,-8.3 Q-0.9,0 0.3,8.3" fill="none" stroke="#2e1503" stroke-width="1.5"/></g><g transform="translate(908.3,590.2) rotate(35)"><ellipse rx="7.3" ry="10.2" fill="currentColor"/><path d="M0.5,-8.3 Q-0.9,0 0.3,8.3" fill="none" stroke="#2e1503" stroke-width="1.5"/></g><g transform="translate(847.3,595.4) rotate(-30)"><ellipse rx="7.3" ry="10.2" fill="currentColor"/><path d="M0.5,-8.3 Q-0.9,0 0.3,8.3" fill="none" stroke="#2e1503" stroke-width="1.5"/></g><g transform="translate(868.75,601.7) rotate(-10)"><ellipse rx="7.3" ry="10.2" fill="currentColor"/><path d="M0.5,-8.3 Q-0.9,0 0.3,8.3" fill="none" stroke="#2e1503" stroke-width="1.5"/></g><g transform="translate(570.2,616.9) rotate(40)"><ellipse rx="7.3" ry="10.2" fill="currentColor"/><path d="M0.5,-8.3 Q-0.9,0 0.3,8.3" fill="none" stroke="#2e1503" stroke-width="1.5"/></g><g transform="translate(610,615.2) rotate(40)"><ellipse rx="7.3" ry="10.2" fill="currentColor"/><path d="M0.5,-8.3 Q-0.9,0 0.3,8.3" fill="none" stroke="#2e1503" stroke-width="1.5"/></g><g transform="translate(614.2,639.4) rotate(-35)"><ellipse rx="7.3" ry="10.2" fill="currentColor"/><path d="M0.5,-8.3 Q-0.9,0 0.3,8.3" fill="none" stroke="#2e1503" stroke-width="1.5"/></g><g transform="translate(635.8,644.4) rotate(-15)"><ellipse rx="7.3" ry="10.2" fill="currentColor"/><path d="M0.5,-8.3 Q-0.9,0 0.3,8.3" fill="none" stroke="#2e1503" stroke-width="1.5"/></g><g transform="translate(575.6,655) rotate(-25)"><ellipse rx="7.3" ry="10.2" fill="currentColor"/><path d="M0.5,-8.3 Q-0.9,0 0.3,8.3" fill="none" stroke="#2e1503" stroke-width="1.5"/></g><g transform="translate(595.2,665.4) rotate(-5)"><ellipse rx="7.3" ry="10.2" fill="currentColor"/><path d="M0.5,-8.3 Q-0.9,0 0.3,8.3" fill="none" stroke="#2e1503" stroke-width="1.5"/></g><g transform="translate(705.4,634.2) rotate(-55)"><ellipse rx="7.3" ry="10.2" fill="currentColor"/><path d="M0.5,-8.3 Q-0.9,0 0.3,8.3" fill="none" stroke="#2e1503" stroke-width="1.5"/></g><g transform="translate(727.7,635) rotate(-25)"><ellipse rx="7.3" ry="10.2" fill="currentColor"/><path d="M0.5,-8.3 Q-0.9,0 0.3,8.3" fill="none" stroke="#2e1503" stroke-width="1.5"/></g><g transform="translate(781.5,655) rotate(-40)"><ellipse rx="7.3" ry="10.2" fill="currentColor"/><path d="M0.5,-8.3 Q-0.9,0 0.3,8.3" fill="none" stroke="#2e1503" stroke-width="1.5"/></g><g transform="translate(674,674.6) rotate(-20)"><ellipse rx="7.3" ry="10.2" fill="currentColor"/><path d="M0.5,-8.3 Q-0.9,0 0.3,8.3" fill="none" stroke="#2e1503" stroke-width="1.5"/></g><g transform="translate(691.7,687) rotate(5)"><ellipse rx="7.3" ry="10.2" fill="currentColor"/><path d="M0.5,-8.3 Q-0.9,0 0.3,8.3" fill="none" stroke="#2e1503" stroke-width="1.5"/></g><g transform="translate(753,681.9) rotate(-15)"><ellipse rx="7.3" ry="10.2" fill="currentColor"/><path d="M0.5,-8.3 Q-0.9,0 0.3,8.3" fill="none" stroke="#2e1503" stroke-width="1.5"/></g><g transform="translate(771.25,694.4) rotate(5)"><ellipse rx="7.3" ry="10.2" fill="currentColor"/><path d="M0.5,-8.3 Q-0.9,0 0.3,8.3" fill="none" stroke="#2e1503" stroke-width="1.5"/></g><g transform="translate(834.4,624.2) rotate(50)"><ellipse rx="7.3" ry="10.2" fill="currentColor"/><path d="M0.5,-8.3 Q-0.9,0 0.3,8.3" fill="none" stroke="#2e1503" stroke-width="1.5"/></g><g transform="translate(832.5,646.5) rotate(63)"><ellipse rx="7.3" ry="10.2" fill="currentColor"/><path d="M0.5,-8.3 Q-0.9,0 0.3,8.3" fill="none" stroke="#2e1503" stroke-width="1.5"/></g><g transform="translate(802.5,660) rotate(-12)"><ellipse rx="7.3" ry="10.2" fill="currentColor"/><path d="M0.5,-8.3 Q-0.9,0 0.3,8.3" fill="none" stroke="#2e1503" stroke-width="1.5"/></g><g transform="translate(918,634.2) rotate(-8)"><ellipse rx="7.3" ry="10.2" fill="currentColor"/><path d="M0.5,-8.3 Q-0.9,0 0.3,8.3" fill="none" stroke="#2e1503" stroke-width="1.5"/></g><g transform="translate(933.75,649.8) rotate(10)"><ellipse rx="7.3" ry="10.2" fill="currentColor"/><path d="M0.5,-8.3 Q-0.9,0 0.3,8.3" fill="none" stroke="#2e1503" stroke-width="1.5"/></g><g transform="translate(979.2,611) rotate(5)"><ellipse rx="7.3" ry="10.2" fill="currentColor"/><path d="M0.5,-8.3 Q-0.9,0 0.3,8.3" fill="none" stroke="#2e1503" stroke-width="1.5"/></g><g transform="translate(990,630.4) rotate(30)"><ellipse rx="7.3" ry="10.2" fill="currentColor"/><path d="M0.5,-8.3 Q-0.9,0 0.3,8.3" fill="none" stroke="#2e1503" stroke-width="1.5"/></g><g transform="translate(883,670) rotate(-10)"><ellipse rx="7.3" ry="10.2" fill="currentColor"/><path d="M0.5,-8.3 Q-0.9,0 0.3,8.3" fill="none" stroke="#2e1503" stroke-width="1.5"/></g><g transform="translate(899.4,685.6) rotate(15)"><ellipse rx="7.3" ry="10.2" fill="currentColor"/><path d="M0.5,-8.3 Q-0.9,0 0.3,8.3" fill="none" stroke="#2e1503" stroke-width="1.5"/></g></g></defs><rect x="532.2" y="310.3" width="494.5" height="279.3" fill="#ffffff"/><g style="color:#6e3b0c"><g transform="translate(549.6,351.5) rotate(-18)"><ellipse rx="7.3" ry="10.2" fill="#6b3b10"/><path d="M0.5,-8.3 Q-0.9,0 0.3,8.3" fill="none" stroke="#3a1704" stroke-width="1.5"/></g><g transform="translate(567.7,364) rotate(5)"><ellipse rx="7.3" ry="10.2" fill="#6b3b10"/><path d="M0.5,-8.3 Q-0.9,0 0.3,8.3" fill="none" stroke="#3a1704" stroke-width="1.5"/></g><g transform="translate(627.7,338.8) rotate(-62)"><ellipse rx="7.3" ry="10.2" fill="#6b3b10"/><path d="M0.5,-8.3 Q-0.9,0 0.3,8.3" fill="none" stroke="#3a1704" stroke-width="1.5"/></g><g transform="translate(649.6,340.6) rotate(-37)"><ellipse rx="7.3" ry="10.2" fill="#6b3b10"/><path d="M0.5,-8.3 Q-0.9,0 0.3,8.3" fill="none" stroke="#3a1704" stroke-width="1.5"/></g><g transform="translate(611.5,364) rotate(-8)"><ellipse rx="7.3" ry="10.2" fill="#6b3b10"/><path d="M0.5,-8.3 Q-0.9,0 0.3,8.3" fill="none" stroke="#3a1704" stroke-width="1.5"/></g><g transform="translate(627.5,379.6) rotate(12)"><ellipse rx="7.3" ry="10.2" fill="#6b3b10"/><path d="M0.5,-8.3 Q-0.9,0 0.3,8.3" fill="none" stroke="#3a1704" stroke-width="1.5"/></g><g transform="translate(717.3,334.4) rotate(-8)"><ellipse rx="7.3" ry="10.2" fill="#6b3b10"/><path d="M0.5,-8.3 Q-0.9,0 0.3,8.3" fill="none" stroke="#3a1704" stroke-width="1.5"/></g><g transform="translate(733.3,349.6) rotate(12)"><ellipse rx="7.3" ry="10.2" fill="#6b3b10"/><path d="M0.5,-8.3 Q-0.9,0 0.3,8.3" fill="none" stroke="#3a1704" stroke-width="1.5"/></g><g transform="translate(678.5,363) rotate(-8)"><ellipse rx="7.3" ry="10.2" fill="#6b3b10"/><path d="M0.5,-8.3 Q-0.9,0 0.3,8.3" fill="none" stroke="#3a1704" stroke-width="1.5"/></g><g transform="translate(694.4,378.5) rotate(12)"><ellipse rx="7.3" ry="10.2" fill="#6b3b10"/><path d="M0.5,-8.3 Q-0.9,0 0.3,8.3" fill="none" stroke="#3a1704" stroke-width="1.5"/></g><g transform="translate(753.75,388) rotate(-3)"><ellipse rx="7.3" ry="10.2" fill="#6b3b10"/><path d="M0.5,-8.3 Q-0.9,0 0.3,8.3" fill="none" stroke="#3a1704" stroke-width="1.5"/></g><g transform="translate(765.6,406.7) rotate(25)"><ellipse rx="7.3" ry="10.2" fill="#6b3b10"/><path d="M0.5,-8.3 Q-0.9,0 0.3,8.3" fill="none" stroke="#3a1704" stroke-width="1.5"/></g><g transform="translate(551.5,407) rotate(8)"><ellipse rx="7.3" ry="10.2" fill="#6b3b10"/><path d="M0.5,-8.3 Q-0.9,0 0.3,8.3" fill="none" stroke="#3a1704" stroke-width="1.5"/></g><g transform="translate(561.9,427) rotate(30)"><ellipse rx="7.3" ry="10.2" fill="#6b3b10"/><path d="M0.5,-8.3 Q-0.9,0 0.3,8.3" fill="none" stroke="#3a1704" stroke-width="1.5"/></g><g transform="translate(585.4,428.5) rotate(-10)"><ellipse rx="7.3" ry="10.2" fill="#6b3b10"/><path d="M0.5,-8.3 Q-0.9,0 0.3,8.3" fill="none" stroke="#3a1704" stroke-width="1.5"/></g><g transform="translate(601.5,444) rotate(12)"><ellipse rx="7.3" ry="10.2" fill="#6b3b10"/><path d="M0.5,-8.3 Q-0.9,0 0.3,8.3" fill="none" stroke="#3a1704" stroke-width="1.5"/></g><g transform="translate(649.4,413) rotate(-10)"><ellipse rx="7.3" ry="10.2" fill="#6b3b10"/><path d="M0.5,-8.3 Q-0.9,0 0.3,8.3" fill="none" stroke="#3a1704" stroke-width="1.5"/></g><g transform="translate(665.6,428.5) rotate(10)"><ellipse rx="7.3" ry="10.2" fill="#6b3b10"/><path d="M0.5,-8.3 Q-0.9,0 0.3,8.3" fill="none" stroke="#3a1704" stroke-width="1.5"/></g><g transform="translate(712,428) rotate(-35)"><ellipse rx="7.3" ry="10.2" fill="#6b3b10"/><path d="M0.5,-8.3 Q-0.9,0 0.3,8.3" fill="none" stroke="#3a1704" stroke-width="1.5"/></g><g transform="translate(733.3,434.6) rotate(-10)"><ellipse rx="7.3" ry="10.2" fill="#6b3b10"/><path d="M0.5,-8.3 Q-0.9,0 0.3,8.3" fill="none" stroke="#3a1704" stroke-width="1.5"/></g><g transform="translate(786.5,343.3) rotate(-5)"><ellipse rx="7.3" ry="10.2" fill="#6b3b10"/><path d="M0.5,-8.3 Q-0.9,0 0.3,8.3" fill="none" stroke="#3a1704" stroke-width="1.5"/></g><g transform="translate(802.5,359.4) rotate(10)"><ellipse rx="7.3" ry="10.2" fill="#6b3b10"/><path d="M0.5,-8.3 Q-0.9,0 0.3,8.3" fill="none" stroke="#3a1704" stroke-width="1.5"/></g><g transform="translate(834.8,352.5) rotate(-20)"><ellipse rx="7.3" ry="10.2" fill="#6b3b10"/><path d="M0.5,-8.3 Q-0.9,0 0.3,8.3" fill="none" stroke="#3a1704" stroke-width="1.5"/></g><g transform="translate(854.8,362) rotate(-5)"><ellipse rx="7.3" ry="10.2" fill="#6b3b10"/><path d="M0.5,-8.3 Q-0.9,0 0.3,8.3" fill="none" stroke="#3a1704" stroke-width="1.5"/></g><g transform="translate(897.5,361.5) rotate(-5)"><ellipse rx="7.3" ry="10.2" fill="#6b3b10"/><path d="M0.5,-8.3 Q-0.9,0 0.3,8.3" fill="none" stroke="#3a1704" stroke-width="1.5"/></g><g transform="translate(913.3,377.5) rotate(12)"><ellipse rx="7.3" ry="10.2" fill="#6b3b10"/><path d="M0.5,-8.3 Q-0.9,0 0.3,8.3" fill="none" stroke="#3a1704" stroke-width="1.5"/></g><g transform="translate(939.6,364.8) rotate(-50)"><ellipse rx="7.3" ry="10.2" fill="#6b3b10"/><path d="M0.5,-8.3 Q-0.9,0 0.3,8.3" fill="none" stroke="#3a1704" stroke-width="1.5"/></g><g transform="translate(961.6,366.3) rotate(-33)"><ellipse rx="7.3" ry="10.2" fill="#6b3b10"/><path d="M0.5,-8.3 Q-0.9,0 0.3,8.3" fill="none" stroke="#3a1704" stroke-width="1.5"/></g><g transform="translate(983.3,349.4) rotate(-5)"><ellipse rx="7.3" ry="10.2" fill="#6b3b10"/><path d="M0.5,-8.3 Q-0.9,0 0.3,8.3" fill="none" stroke="#3a1704" stroke-width="1.5"/></g><g transform="translate(999.4,364.6) rotate(10)"><ellipse rx="7.3" ry="10.2" fill="#6b3b10"/><path d="M0.5,-8.3 Q-0.9,0 0.3,8.3" fill="none" stroke="#3a1704" stroke-width="1.5"/></g><g transform="translate(844.6,391.25) rotate(15)"><ellipse rx="7.3" ry="10.2" fill="#6b3b10"/><path d="M0.5,-8.3 Q-0.9,0 0.3,8.3" fill="none" stroke="#3a1704" stroke-width="1.5"/></g><g transform="translate(852,412) rotate(40)"><ellipse rx="7.3" ry="10.2" fill="#6b3b10"/><path d="M0.5,-8.3 Q-0.9,0 0.3,8.3" fill="none" stroke="#3a1704" stroke-width="1.5"/></g><g transform="translate(946.5,412) rotate(-8)"><ellipse rx="7.3" ry="10.2" fill="#6b3b10"/><path d="M0.5,-8.3 Q-0.9,0 0.3,8.3" fill="none" stroke="#3a1704" stroke-width="1.5"/></g><g transform="translate(962.5,427.5) rotate(10)"><ellipse rx="7.3" ry="10.2" fill="#6b3b10"/><path d="M0.5,-8.3 Q-0.9,0 0.3,8.3" fill="none" stroke="#3a1704" stroke-width="1.5"/></g><g transform="translate(914.6,432.7) rotate(-61)"><ellipse rx="7.3" ry="10.2" fill="#6b3b10"/><path d="M0.5,-8.3 Q-0.9,0 0.3,8.3" fill="none" stroke="#3a1704" stroke-width="1.5"/></g><g transform="translate(895.4,443.75) rotate(-84)"><ellipse rx="7.3" ry="10.2" fill="#6b3b10"/><path d="M0.5,-8.3 Q-0.9,0 0.3,8.3" fill="none" stroke="#3a1704" stroke-width="1.5"/></g><g transform="translate(564,477) rotate(-5)"><ellipse rx="7.3" ry="10.2" fill="#6b3b10"/><path d="M0.5,-8.3 Q-0.9,0 0.3,8.3" fill="none" stroke="#3a1704" stroke-width="1.5"/></g><g transform="translate(579.6,492.5) rotate(10)"><ellipse rx="7.3" ry="10.2" fill="#6b3b10"/><path d="M0.5,-8.3 Q-0.9,0 0.3,8.3" fill="none" stroke="#3a1704" stroke-width="1.5"/></g><g transform="translate(628.75,485.8) rotate(35)"><ellipse rx="7.3" ry="10.2" fill="#6b3b10"/><path d="M0.5,-8.3 Q-0.9,0 0.3,8.3" fill="none" stroke="#3a1704" stroke-width="1.5"/></g><g transform="translate(629.8,508) rotate(58)"><ellipse rx="7.3" ry="10.2" fill="#6b3b10"/><path d="M0.5,-8.3 Q-0.9,0 0.3,8.3" fill="none" stroke="#3a1704" stroke-width="1.5"/></g><g transform="translate(683.3,463.3) rotate(-10)"><ellipse rx="7.3" ry="10.2" fill="#6b3b10"/><path d="M0.5,-8.3 Q-0.9,0 0.3,8.3" fill="none" stroke="#3a1704" stroke-width="1.5"/></g><g transform="translate(699.4,478.5) rotate(10)"><ellipse rx="7.3" ry="10.2" fill="#6b3b10"/><path d="M0.5,-8.3 Q-0.9,0 0.3,8.3" fill="none" stroke="#3a1704" stroke-width="1.5"/></g><g transform="translate(758.75,481.7) rotate(-35)"><ellipse rx="7.3" ry="10.2" fill="#6b3b10"/><path d="M0.5,-8.3 Q-0.9,0 0.3,8.3" fill="none" stroke="#3a1704" stroke-width="1.5"/></g><g transform="translate(779,488.4) rotate(-15)"><ellipse rx="7.3" ry="10.2" fill="#6b3b10"/><path d="M0.5,-8.3 Q-0.9,0 0.3,8.3" fill="none" stroke="#3a1704" stroke-width="1.5"/></g><g transform="translate(743.1,523.3) rotate(-8)"><ellipse rx="7.3" ry="10.2" fill="#6b3b10"/><path d="M0.5,-8.3 Q-0.9,0 0.3,8.3" fill="none" stroke="#3a1704" stroke-width="1.5"/></g><g transform="translate(759.4,538.5) rotate(10)"><ellipse rx="7.3" ry="10.2" fill="#6b3b10"/><path d="M0.5,-8.3 Q-0.9,0 0.3,8.3" fill="none" stroke="#3a1704" stroke-width="1.5"/></g><g transform="translate(611.7,539.4) rotate(-61)"><ellipse rx="7.3" ry="10.2" fill="#6b3b10"/><path d="M0.5,-8.3 Q-0.9,0 0.3,8.3" fill="none" stroke="#3a1704" stroke-width="1.5"/></g><g transform="translate(634,539.6) rotate(-25)"><ellipse rx="7.3" ry="10.2" fill="#6b3b10"/><path d="M0.5,-8.3 Q-0.9,0 0.3,8.3" fill="none" stroke="#3a1704" stroke-width="1.5"/></g><g transform="translate(670.8,535.2) rotate(-25)"><ellipse rx="7.3" ry="10.2" fill="#6b3b10"/><path d="M0.5,-8.3 Q-0.9,0 0.3,8.3" fill="none" stroke="#3a1704" stroke-width="1.5"/></g><g transform="translate(691.25,543.5) rotate(-5)"><ellipse rx="7.3" ry="10.2" fill="#6b3b10"/><path d="M0.5,-8.3 Q-0.9,0 0.3,8.3" fill="none" stroke="#3a1704" stroke-width="1.5"/></g><g transform="translate(562.5,557.3) rotate(-8)"><ellipse rx="7.3" ry="10.2" fill="#6b3b10"/><path d="M0.5,-8.3 Q-0.9,0 0.3,8.3" fill="none" stroke="#3a1704" stroke-width="1.5"/></g><g transform="translate(578.5,573.3) rotate(12)"><ellipse rx="7.3" ry="10.2" fill="#6b3b10"/><path d="M0.5,-8.3 Q-0.9,0 0.3,8.3" fill="none" stroke="#3a1704" stroke-width="1.5"/></g><g transform="translate(655.4,570.2) rotate(-8)"><ellipse rx="7.3" ry="10.2" fill="#6b3b10"/><path d="M0.5,-8.3 Q-0.9,0 0.3,8.3" fill="none" stroke="#3a1704" stroke-width="1.5"/></g><g transform="translate(671.5,585.5) rotate(10)"><ellipse rx="7.3" ry="10.2" fill="#6b3b10"/><path d="M0.5,-8.3 Q-0.9,0 0.3,8.3" fill="none" stroke="#3a1704" stroke-width="1.5"/></g><g transform="translate(696.25,586.5) rotate(-5)"><ellipse rx="7.3" ry="10.2" fill="#6b3b10"/><path d="M0.5,-8.3 Q-0.9,0 0.3,8.3" fill="none" stroke="#3a1704" stroke-width="1.5"/></g><g transform="translate(754.2,577.7) rotate(-8)"><ellipse rx="7.3" ry="10.2" fill="#6b3b10"/><path d="M0.5,-8.3 Q-0.9,0 0.3,8.3" fill="none" stroke="#3a1704" stroke-width="1.5"/></g><g transform="translate(770.5,593) rotate(12)"><ellipse rx="7.3" ry="10.2" fill="#6b3b10"/><path d="M0.5,-8.3 Q-0.9,0 0.3,8.3" fill="none" stroke="#3a1704" stroke-width="1.5"/></g><g transform="translate(563.5,596) rotate(15)"><ellipse rx="7.3" ry="10.2" fill="#6b3b10"/><path d="M0.5,-8.3 Q-0.9,0 0.3,8.3" fill="none" stroke="#3a1704" stroke-width="1.5"/></g><g transform="translate(604.2,594) rotate(15)"><ellipse rx="7.3" ry="10.2" fill="#6b3b10"/><path d="M0.5,-8.3 Q-0.9,0 0.3,8.3" fill="none" stroke="#3a1704" stroke-width="1.5"/></g><g transform="translate(711.8,601.5) rotate(10)"><ellipse rx="7.3" ry="10.2" fill="#6b3b10"/><path d="M0.5,-8.3 Q-0.9,0 0.3,8.3" fill="none" stroke="#3a1704" stroke-width="1.5"/></g><g transform="translate(825.4,452.5) rotate(-5)"><ellipse rx="7.3" ry="10.2" fill="#6b3b10"/><path d="M0.5,-8.3 Q-0.9,0 0.3,8.3" fill="none" stroke="#3a1704" stroke-width="1.5"/></g><g transform="translate(841.25,468) rotate(10)"><ellipse rx="7.3" ry="10.2" fill="#6b3b10"/><path d="M0.5,-8.3 Q-0.9,0 0.3,8.3" fill="none" stroke="#3a1704" stroke-width="1.5"/></g><g transform="translate(866.25,462.3) rotate(-5)"><ellipse rx="7.3" ry="10.2" fill="#6b3b10"/><path d="M0.5,-8.3 Q-0.9,0 0.3,8.3" fill="none" stroke="#3a1704" stroke-width="1.5"/></g><g transform="translate(882.3,478) rotate(10)"><ellipse rx="7.3" ry="10.2" fill="#6b3b10"/><path d="M0.5,-8.3 Q-0.9,0 0.3,8.3" fill="none" stroke="#3a1704" stroke-width="1.5"/></g><g transform="translate(981.25,452.5) rotate(-10)"><ellipse rx="7.3" ry="10.2" fill="#6b3b10"/><path d="M0.5,-8.3 Q-0.9,0 0.3,8.3" fill="none" stroke="#3a1704" stroke-width="1.5"/></g><g transform="translate(997.5,468) rotate(10)"><ellipse rx="7.3" ry="10.2" fill="#6b3b10"/><path d="M0.5,-8.3 Q-0.9,0 0.3,8.3" fill="none" stroke="#3a1704" stroke-width="1.5"/></g><g transform="translate(951,485.2) rotate(-5)"><ellipse rx="7.3" ry="10.2" fill="#6b3b10"/><path d="M0.5,-8.3 Q-0.9,0 0.3,8.3" fill="none" stroke="#3a1704" stroke-width="1.5"/></g><g transform="translate(966.7,500.4) rotate(10)"><ellipse rx="7.3" ry="10.2" fill="#6b3b10"/><path d="M0.5,-8.3 Q-0.9,0 0.3,8.3" fill="none" stroke="#3a1704" stroke-width="1.5"/></g><g transform="translate(834,520.6) rotate(-5)"><ellipse rx="7.3" ry="10.2" fill="#6b3b10"/><path d="M0.5,-8.3 Q-0.9,0 0.3,8.3" fill="none" stroke="#3a1704" stroke-width="1.5"/></g><g transform="translate(849.6,536.25) rotate(12)"><ellipse rx="7.3" ry="10.2" fill="#6b3b10"/><path d="M0.5,-8.3 Q-0.9,0 0.3,8.3" fill="none" stroke="#3a1704" stroke-width="1.5"/></g><g transform="translate(800,543) rotate(-5)"><ellipse rx="7.3" ry="10.2" fill="#6b3b10"/><path d="M0.5,-8.3 Q-0.9,0 0.3,8.3" fill="none" stroke="#3a1704" stroke-width="1.5"/></g><g transform="translate(815.6,558.75) rotate(10)"><ellipse rx="7.3" ry="10.2" fill="#6b3b10"/><path d="M0.5,-8.3 Q-0.9,0 0.3,8.3" fill="none" stroke="#3a1704" stroke-width="1.5"/></g><g transform="translate(933,534.2) rotate(-5)"><ellipse rx="7.3" ry="10.2" fill="#6b3b10"/><path d="M0.5,-8.3 Q-0.9,0 0.3,8.3" fill="none" stroke="#3a1704" stroke-width="1.5"/></g><g transform="translate(950,550.4) rotate(8)"><ellipse rx="7.3" ry="10.2" fill="#6b3b10"/><path d="M0.5,-8.3 Q-0.9,0 0.3,8.3" fill="none" stroke="#3a1704" stroke-width="1.5"/></g><g transform="translate(991.25,545.2) rotate(-15)"><ellipse rx="7.3" ry="10.2" fill="#6b3b10"/><path d="M0.5,-8.3 Q-0.9,0 0.3,8.3" fill="none" stroke="#3a1704" stroke-width="1.5"/></g><g transform="translate(1009.4,557.7) rotate(-3)"><ellipse rx="7.3" ry="10.2" fill="#6b3b10"/><path d="M0.5,-8.3 Q-0.9,0 0.3,8.3" fill="none" stroke="#3a1704" stroke-width="1.5"/></g><g transform="translate(899,570.5) rotate(10)"><ellipse rx="7.3" ry="10.2" fill="#6b3b10"/><path d="M0.5,-8.3 Q-0.9,0 0.3,8.3" fill="none" stroke="#3a1704" stroke-width="1.5"/></g><g transform="translate(908.3,590.2) rotate(35)"><ellipse rx="7.3" ry="10.2" fill="#6b3b10"/><path d="M0.5,-8.3 Q-0.9,0 0.3,8.3" fill="none" stroke="#3a1704" stroke-width="1.5"/></g><g transform="translate(847.3,595.4) rotate(-30)"><ellipse rx="7.3" ry="10.2" fill="#6b3b10"/><path d="M0.5,-8.3 Q-0.9,0 0.3,8.3" fill="none" stroke="#3a1704" stroke-width="1.5"/></g><g transform="translate(868.75,601.7) rotate(-10)"><ellipse rx="7.3" ry="10.2" fill="#6b3b10"/><path d="M0.5,-8.3 Q-0.9,0 0.3,8.3" fill="none" stroke="#3a1704" stroke-width="1.5"/></g><g transform="translate(570.2,616.9) rotate(40)"><ellipse rx="7.3" ry="10.2" fill="#6b3b10"/><path d="M0.5,-8.3 Q-0.9,0 0.3,8.3" fill="none" stroke="#3a1704" stroke-width="1.5"/></g><g transform="translate(610,615.2) rotate(40)"><ellipse rx="7.3" ry="10.2" fill="#6b3b10"/><path d="M0.5,-8.3 Q-0.9,0 0.3,8.3" fill="none" stroke="#3a1704" stroke-width="1.5"/></g><g transform="translate(614.2,639.4) rotate(-35)"><ellipse rx="7.3" ry="10.2" fill="#6b3b10"/><path d="M0.5,-8.3 Q-0.9,0 0.3,8.3" fill="none" stroke="#3a1704" stroke-width="1.5"/></g><g transform="translate(635.8,644.4) rotate(-15)"><ellipse rx="7.3" ry="10.2" fill="#6b3b10"/><path d="M0.5,-8.3 Q-0.9,0 0.3,8.3" fill="none" stroke="#3a1704" stroke-width="1.5"/></g><g transform="translate(575.6,655) rotate(-25)"><ellipse rx="7.3" ry="10.2" fill="#6b3b10"/><path d="M0.5,-8.3 Q-0.9,0 0.3,8.3" fill="none" stroke="#3a1704" stroke-width="1.5"/></g><g transform="translate(595.2,665.4) rotate(-5)"><ellipse rx="7.3" ry="10.2" fill="#6b3b10"/><path d="M0.5,-8.3 Q-0.9,0 0.3,8.3" fill="none" stroke="#3a1704" stroke-width="1.5"/></g><g transform="translate(705.4,634.2) rotate(-55)"><ellipse rx="7.3" ry="10.2" fill="#6b3b10"/><path d="M0.5,-8.3 Q-0.9,0 0.3,8.3" fill="none" stroke="#3a1704" stroke-width="1.5"/></g><g transform="translate(727.7,635) rotate(-25)"><ellipse rx="7.3" ry="10.2" fill="#6b3b10"/><path d="M0.5,-8.3 Q-0.9,0 0.3,8.3" fill="none" stroke="#3a1704" stroke-width="1.5"/></g><g transform="translate(781.5,655) rotate(-40)"><ellipse rx="7.3" ry="10.2" fill="#6b3b10"/><path d="M0.5,-8.3 Q-0.9,0 0.3,8.3" fill="none" stroke="#3a1704" stroke-width="1.5"/></g><g transform="translate(674,674.6) rotate(-20)"><ellipse rx="7.3" ry="10.2" fill="#6b3b10"/><path d="M0.5,-8.3 Q-0.9,0 0.3,8.3" fill="none" stroke="#3a1704" stroke-width="1.5"/></g><g transform="translate(691.7,687) rotate(5)"><ellipse rx="7.3" ry="10.2" fill="#6b3b10"/><path d="M0.5,-8.3 Q-0.9,0 0.3,8.3" fill="none" stroke="#3a1704" stroke-width="1.5"/></g><g transform="translate(753,681.9) rotate(-15)"><ellipse rx="7.3" ry="10.2" fill="#6b3b10"/><path d="M0.5,-8.3 Q-0.9,0 0.3,8.3" fill="none" stroke="#3a1704" stroke-width="1.5"/></g><g transform="translate(771.25,694.4) rotate(5)"><ellipse rx="7.3" ry="10.2" fill="#6b3b10"/><path d="M0.5,-8.3 Q-0.9,0 0.3,8.3" fill="none" stroke="#3a1704" stroke-width="1.5"/></g><g transform="translate(834.4,624.2) rotate(50)"><ellipse rx="7.3" ry="10.2" fill="#6b3b10"/><path d="M0.5,-8.3 Q-0.9,0 0.3,8.3" fill="none" stroke="#3a1704" stroke-width="1.5"/></g><g transform="translate(832.5,646.5) rotate(63)"><ellipse rx="7.3" ry="10.2" fill="#6b3b10"/><path d="M0.5,-8.3 Q-0.9,0 0.3,8.3" fill="none" stroke="#3a1704" stroke-width="1.5"/></g><g transform="translate(802.5,660) rotate(-12)"><ellipse rx="7.3" ry="10.2" fill="#6b3b10"/><path d="M0.5,-8.3 Q-0.9,0 0.3,8.3" fill="none" stroke="#3a1704" stroke-width="1.5"/></g><g transform="translate(918,634.2) rotate(-8)"><ellipse rx="7.3" ry="10.2" fill="#6b3b10"/><path d="M0.5,-8.3 Q-0.9,0 0.3,8.3" fill="none" stroke="#3a1704" stroke-width="1.5"/></g><g transform="translate(933.75,649.8) rotate(10)"><ellipse rx="7.3" ry="10.2" fill="#6b3b10"/><path d="M0.5,-8.3 Q-0.9,0 0.3,8.3" fill="none" stroke="#3a1704" stroke-width="1.5"/></g><g transform="translate(979.2,611) rotate(5)"><ellipse rx="7.3" ry="10.2" fill="#6b3b10"/><path d="M0.5,-8.3 Q-0.9,0 0.3,8.3" fill="none" stroke="#3a1704" stroke-width="1.5"/></g><g transform="translate(990,630.4) rotate(30)"><ellipse rx="7.3" ry="10.2" fill="#6b3b10"/><path d="M0.5,-8.3 Q-0.9,0 0.3,8.3" fill="none" stroke="#3a1704" stroke-width="1.5"/></g><g transform="translate(883,670) rotate(-10)"><ellipse rx="7.3" ry="10.2" fill="#6b3b10"/><path d="M0.5,-8.3 Q-0.9,0 0.3,8.3" fill="none" stroke="#3a1704" stroke-width="1.5"/></g><g transform="translate(899.4,685.6) rotate(15)"><ellipse rx="7.3" ry="10.2" fill="#6b3b10"/><path d="M0.5,-8.3 Q-0.9,0 0.3,8.3" fill="none" stroke="#3a1704" stroke-width="1.5"/></g></g><rect x="532.2" y="310.3" width="494.5" height="279.3" fill="#ffffff"/><g clip-path="url(#cs)"><g transform="translate(549.6,351.5) rotate(-18)"><ellipse rx="7.3" ry="10.2" fill="#5f300c"/><path d="M0.5,-8.3 Q-0.9,0 0.3,8.3" fill="none" stroke="#381805" stroke-width="1.5"/></g><g transform="translate(567.7,364) rotate(5)"><ellipse rx="7.3" ry="10.2" fill="#5f300c"/><path d="M0.5,-8.3 Q-0.9,0 0.3,8.3" fill="none" stroke="#381805" stroke-width="1.5"/></g><g transform="translate(627.7,338.8) rotate(-62)"><ellipse rx="7.3" ry="10.2" fill="#5f300c"/><path d="M0.5,-8.3 Q-0.9,0 0.3,8.3" fill="none" stroke="#381805" stroke-width="1.5"/></g><g transform="translate(649.6,340.6) rotate(-37)"><ellipse rx="7.3" ry="10.2" fill="#5f300c"/><path d="M0.5,-8.3 Q-0.9,0 0.3,8.3" fill="none" stroke="#381805" stroke-width="1.5"/></g><g transform="translate(611.5,364) rotate(-8)"><ellipse rx="7.3" ry="10.2" fill="#5f300c"/><path d="M0.5,-8.3 Q-0.9,0 0.3,8.3" fill="none" stroke="#381805" stroke-width="1.5"/></g><g transform="translate(627.5,379.6) rotate(12)"><ellipse rx="7.3" ry="10.2" fill="#5f300c"/><path d="M0.5,-8.3 Q-0.9,0 0.3,8.3" fill="none" stroke="#381805" stroke-width="1.5"/></g><g transform="translate(717.3,334.4) rotate(-8)"><ellipse rx="7.3" ry="10.2" fill="#5f300c"/><path d="M0.5,-8.3 Q-0.9,0 0.3,8.3" fill="none" stroke="#381805" stroke-width="1.5"/></g><g transform="translate(733.3,349.6) rotate(12)"><ellipse rx="7.3" ry="10.2" fill="#5f300c"/><path d="M0.5,-8.3 Q-0.9,0 0.3,8.3" fill="none" stroke="#381805" stroke-width="1.5"/></g><g transform="translate(678.5,363) rotate(-8)"><ellipse rx="7.3" ry="10.2" fill="#5f300c"/><path d="M0.5,-8.3 Q-0.9,0 0.3,8.3" fill="none" stroke="#381805" stroke-width="1.5"/></g><g transform="translate(694.4,378.5) rotate(12)"><ellipse rx="7.3" ry="10.2" fill="#5f300c"/><path d="M0.5,-8.3 Q-0.9,0 0.3,8.3" fill="none" stroke="#381805" stroke-width="1.5"/></g><g transform="translate(753.75,388) rotate(-3)"><ellipse rx="7.3" ry="10.2" fill="#5f300c"/><path d="M0.5,-8.3 Q-0.9,0 0.3,8.3" fill="none" stroke="#381805" stroke-width="1.5"/></g><g transform="translate(765.6,406.7) rotate(25)"><ellipse rx="7.3" ry="10.2" fill="#5f300c"/><path d="M0.5,-8.3 Q-0.9,0 0.3,8.3" fill="none" stroke="#381805" stroke-width="1.5"/></g><g transform="translate(551.5,407) rotate(8)"><ellipse rx="7.3" ry="10.2" fill="#5f300c"/><path d="M0.5,-8.3 Q-0.9,0 0.3,8.3" fill="none" stroke="#381805" stroke-width="1.5"/></g><g transform="translate(561.9,427) rotate(30)"><ellipse rx="7.3" ry="10.2" fill="#5f300c"/><path d="M0.5,-8.3 Q-0.9,0 0.3,8.3" fill="none" stroke="#381805" stroke-width="1.5"/></g><g transform="translate(585.4,428.5) rotate(-10)"><ellipse rx="7.3" ry="10.2" fill="#5f300c"/><path d="M0.5,-8.3 Q-0.9,0 0.3,8.3" fill="none" stroke="#381805" stroke-width="1.5"/></g><g transform="translate(601.5,444) rotate(12)"><ellipse rx="7.3" ry="10.2" fill="#5f300c"/><path d="M0.5,-8.3 Q-0.9,0 0.3,8.3" fill="none" stroke="#381805" stroke-width="1.5"/></g><g transform="translate(649.4,413) rotate(-10)"><ellipse rx="7.3" ry="10.2" fill="#5f300c"/><path d="M0.5,-8.3 Q-0.9,0 0.3,8.3" fill="none" stroke="#381805" stroke-width="1.5"/></g><g transform="translate(665.6,428.5) rotate(10)"><ellipse rx="7.3" ry="10.2" fill="#5f300c"/><path d="M0.5,-8.3 Q-0.9,0 0.3,8.3" fill="none" stroke="#381805" stroke-width="1.5"/></g><g transform="translate(712,428) rotate(-35)"><ellipse rx="7.3" ry="10.2" fill="#5f300c"/><path d="M0.5,-8.3 Q-0.9,0 0.3,8.3" fill="none" stroke="#381805" stroke-width="1.5"/></g><g transform="translate(733.3,434.6) rotate(-10)"><ellipse rx="7.3" ry="10.2" fill="#5f300c"/><path d="M0.5,-8.3 Q-0.9,0 0.3,8.3" fill="none" stroke="#381805" stroke-width="1.5"/></g><g transform="translate(786.5,343.3) rotate(-5)"><ellipse rx="7.3" ry="10.2" fill="#5f300c"/><path d="M0.5,-8.3 Q-0.9,0 0.3,8.3" fill="none" stroke="#381805" stroke-width="1.5"/></g><g transform="translate(802.5,359.4) rotate(10)"><ellipse rx="7.3" ry="10.2" fill="#5f300c"/><path d="M0.5,-8.3 Q-0.9,0 0.3,8.3" fill="none" stroke="#381805" stroke-width="1.5"/></g><g transform="translate(834.8,352.5) rotate(-20)"><ellipse rx="7.3" ry="10.2" fill="#5f300c"/><path d="M0.5,-8.3 Q-0.9,0 0.3,8.3" fill="none" stroke="#381805" stroke-width="1.5"/></g><g transform="translate(854.8,362) rotate(-5)"><ellipse rx="7.3" ry="10.2" fill="#5f300c"/><path d="M0.5,-8.3 Q-0.9,0 0.3,8.3" fill="none" stroke="#381805" stroke-width="1.5"/></g><g transform="translate(897.5,361.5) rotate(-5)"><ellipse rx="7.3" ry="10.2" fill="#5f300c"/><path d="M0.5,-8.3 Q-0.9,0 0.3,8.3" fill="none" stroke="#381805" stroke-width="1.5"/></g><g transform="translate(913.3,377.5) rotate(12)"><ellipse rx="7.3" ry="10.2" fill="#5f300c"/><path d="M0.5,-8.3 Q-0.9,0 0.3,8.3" fill="none" stroke="#381805" stroke-width="1.5"/></g><g transform="translate(939.6,364.8) rotate(-50)"><ellipse rx="7.3" ry="10.2" fill="#5f300c"/><path d="M0.5,-8.3 Q-0.9,0 0.3,8.3" fill="none" stroke="#381805" stroke-width="1.5"/></g><g transform="translate(961.6,366.3) rotate(-33)"><ellipse rx="7.3" ry="10.2" fill="#5f300c"/><path d="M0.5,-8.3 Q-0.9,0 0.3,8.3" fill="none" stroke="#381805" stroke-width="1.5"/></g><g transform="translate(983.3,349.4) rotate(-5)"><ellipse rx="7.3" ry="10.2" fill="#5f300c"/><path d="M0.5,-8.3 Q-0.9,0 0.3,8.3" fill="none" stroke="#381805" stroke-width="1.5"/></g><g transform="translate(999.4,364.6) rotate(10)"><ellipse rx="7.3" ry="10.2" fill="#5f300c"/><path d="M0.5,-8.3 Q-0.9,0 0.3,8.3" fill="none" stroke="#381805" stroke-width="1.5"/></g><g transform="translate(844.6,391.25) rotate(15)"><ellipse rx="7.3" ry="10.2" fill="#5f300c"/><path d="M0.5,-8.3 Q-0.9,0 0.3,8.3" fill="none" stroke="#381805" stroke-width="1.5"/></g><g transform="translate(852,412) rotate(40)"><ellipse rx="7.3" ry="10.2" fill="#5f300c"/><path d="M0.5,-8.3 Q-0.9,0 0.3,8.3" fill="none" stroke="#381805" stroke-width="1.5"/></g><g transform="translate(946.5,412) rotate(-8)"><ellipse rx="7.3" ry="10.2" fill="#5f300c"/><path d="M0.5,-8.3 Q-0.9,0 0.3,8.3" fill="none" stroke="#381805" stroke-width="1.5"/></g><g transform="translate(962.5,427.5) rotate(10)"><ellipse rx="7.3" ry="10.2" fill="#5f300c"/><path d="M0.5,-8.3 Q-0.9,0 0.3,8.3" fill="none" stroke="#381805" stroke-width="1.5"/></g><g transform="translate(914.6,432.7) rotate(-61)"><ellipse rx="7.3" ry="10.2" fill="#5f300c"/><path d="M0.5,-8.3 Q-0.9,0 0.3,8.3" fill="none" stroke="#381805" stroke-width="1.5"/></g><g transform="translate(895.4,443.75) rotate(-84)"><ellipse rx="7.3" ry="10.2" fill="#5f300c"/><path d="M0.5,-8.3 Q-0.9,0 0.3,8.3" fill="none" stroke="#381805" stroke-width="1.5"/></g><g transform="translate(564,477) rotate(-5)"><ellipse rx="7.3" ry="10.2" fill="#5f300c"/><path d="M0.5,-8.3 Q-0.9,0 0.3,8.3" fill="none" stroke="#381805" stroke-width="1.5"/></g><g transform="translate(579.6,492.5) rotate(10)"><ellipse rx="7.3" ry="10.2" fill="#5f300c"/><path d="M0.5,-8.3 Q-0.9,0 0.3,8.3" fill="none" stroke="#381805" stroke-width="1.5"/></g><g transform="translate(628.75,485.8) rotate(35)"><ellipse rx="7.3" ry="10.2" fill="#5f300c"/><path d="M0.5,-8.3 Q-0.9,0 0.3,8.3" fill="none" stroke="#381805" stroke-width="1.5"/></g><g transform="translate(629.8,508) rotate(58)"><ellipse rx="7.3" ry="10.2" fill="#5f300c"/><path d="M0.5,-8.3 Q-0.9,0 0.3,8.3" fill="none" stroke="#381805" stroke-width="1.5"/></g><g transform="translate(683.3,463.3) rotate(-10)"><ellipse rx="7.3" ry="10.2" fill="#5f300c"/><path d="M0.5,-8.3 Q-0.9,0 0.3,8.3" fill="none" stroke="#381805" stroke-width="1.5"/></g><g transform="translate(699.4,478.5) rotate(10)"><ellipse rx="7.3" ry="10.2" fill="#5f300c"/><path d="M0.5,-8.3 Q-0.9,0 0.3,8.3" fill="none" stroke="#381805" stroke-width="1.5"/></g><g transform="translate(758.75,481.7) rotate(-35)"><ellipse rx="7.3" ry="10.2" fill="#5f300c"/><path d="M0.5,-8.3 Q-0.9,0 0.3,8.3" fill="none" stroke="#381805" stroke-width="1.5"/></g><g transform="translate(779,488.4) rotate(-15)"><ellipse rx="7.3" ry="10.2" fill="#5f300c"/><path d="M0.5,-8.3 Q-0.9,0 0.3,8.3" fill="none" stroke="#381805" stroke-width="1.5"/></g><g transform="translate(743.1,523.3) rotate(-8)"><ellipse rx="7.3" ry="10.2" fill="#5f300c"/><path d="M0.5,-8.3 Q-0.9,0 0.3,8.3" fill="none" stroke="#381805" stroke-width="1.5"/></g><g transform="translate(759.4,538.5) rotate(10)"><ellipse rx="7.3" ry="10.2" fill="#5f300c"/><path d="M0.5,-8.3 Q-0.9,0 0.3,8.3" fill="none" stroke="#381805" stroke-width="1.5"/></g><g transform="translate(611.7,539.4) rotate(-61)"><ellipse rx="7.3" ry="10.2" fill="#5f300c"/><path d="M0.5,-8.3 Q-0.9,0 0.3,8.3" fill="none" stroke="#381805" stroke-width="1.5"/></g><g transform="translate(634,539.6) rotate(-25)"><ellipse rx="7.3" ry="10.2" fill="#5f300c"/><path d="M0.5,-8.3 Q-0.9,0 0.3,8.3" fill="none" stroke="#381805" stroke-width="1.5"/></g><g transform="translate(670.8,535.2) rotate(-25)"><ellipse rx="7.3" ry="10.2" fill="#5f300c"/><path d="M0.5,-8.3 Q-0.9,0 0.3,8.3" fill="none" stroke="#381805" stroke-width="1.5"/></g><g transform="translate(691.25,543.5) rotate(-5)"><ellipse rx="7.3" ry="10.2" fill="#5f300c"/><path d="M0.5,-8.3 Q-0.9,0 0.3,8.3" fill="none" stroke="#381805" stroke-width="1.5"/></g><g transform="translate(562.5,557.3) rotate(-8)"><ellipse rx="7.3" ry="10.2" fill="#5f300c"/><path d="M0.5,-8.3 Q-0.9,0 0.3,8.3" fill="none" stroke="#381805" stroke-width="1.5"/></g><g transform="translate(578.5,573.3) rotate(12)"><ellipse rx="7.3" ry="10.2" fill="#5f300c"/><path d="M0.5,-8.3 Q-0.9,0 0.3,8.3" fill="none" stroke="#381805" stroke-width="1.5"/></g><g transform="translate(655.4,570.2) rotate(-8)"><ellipse rx="7.3" ry="10.2" fill="#5f300c"/><path d="M0.5,-8.3 Q-0.9,0 0.3,8.3" fill="none" stroke="#381805" stroke-width="1.5"/></g><g transform="translate(671.5,585.5) rotate(10)"><ellipse rx="7.3" ry="10.2" fill="#5f300c"/><path d="M0.5,-8.3 Q-0.9,0 0.3,8.3" fill="none" stroke="#381805" stroke-width="1.5"/></g><g transform="translate(696.25,586.5) rotate(-5)"><ellipse rx="7.3" ry="10.2" fill="#5f300c"/><path d="M0.5,-8.3 Q-0.9,0 0.3,8.3" fill="none" stroke="#381805" stroke-width="1.5"/></g><g transform="translate(754.2,577.7) rotate(-8)"><ellipse rx="7.3" ry="10.2" fill="#5f300c"/><path d="M0.5,-8.3 Q-0.9,0 0.3,8.3" fill="none" stroke="#381805" stroke-width="1.5"/></g><g transform="translate(770.5,593) rotate(12)"><ellipse rx="7.3" ry="10.2" fill="#5f300c"/><path d="M0.5,-8.3 Q-0.9,0 0.3,8.3" fill="none" stroke="#381805" stroke-width="1.5"/></g><g transform="translate(563.5,596) rotate(15)"><ellipse rx="7.3" ry="10.2" fill="#5f300c"/><path d="M0.5,-8.3 Q-0.9,0 0.3,8.3" fill="none" stroke="#381805" stroke-width="1.5"/></g><g transform="translate(604.2,594) rotate(15)"><ellipse rx="7.3" ry="10.2" fill="#5f300c"/><path d="M0.5,-8.3 Q-0.9,0 0.3,8.3" fill="none" stroke="#381805" stroke-width="1.5"/></g><g transform="translate(711.8,601.5) rotate(10)"><ellipse rx="7.3" ry="10.2" fill="#5f300c"/><path d="M0.5,-8.3 Q-0.9,0 0.3,8.3" fill="none" stroke="#381805" stroke-width="1.5"/></g><g transform="translate(825.4,452.5) rotate(-5)"><ellipse rx="7.3" ry="10.2" fill="#5f300c"/><path d="M0.5,-8.3 Q-0.9,0 0.3,8.3" fill="none" stroke="#381805" stroke-width="1.5"/></g><g transform="translate(841.25,468) rotate(10)"><ellipse rx="7.3" ry="10.2" fill="#5f300c"/><path d="M0.5,-8.3 Q-0.9,0 0.3,8.3" fill="none" stroke="#381805" stroke-width="1.5"/></g><g transform="translate(866.25,462.3) rotate(-5)"><ellipse rx="7.3" ry="10.2" fill="#5f300c"/><path d="M0.5,-8.3 Q-0.9,0 0.3,8.3" fill="none" stroke="#381805" stroke-width="1.5"/></g><g transform="translate(882.3,478) rotate(10)"><ellipse rx="7.3" ry="10.2" fill="#5f300c"/><path d="M0.5,-8.3 Q-0.9,0 0.3,8.3" fill="none" stroke="#381805" stroke-width="1.5"/></g><g transform="translate(981.25,452.5) rotate(-10)"><ellipse rx="7.3" ry="10.2" fill="#5f300c"/><path d="M0.5,-8.3 Q-0.9,0 0.3,8.3" fill="none" stroke="#381805" stroke-width="1.5"/></g><g transform="translate(997.5,468) rotate(10)"><ellipse rx="7.3" ry="10.2" fill="#5f300c"/><path d="M0.5,-8.3 Q-0.9,0 0.3,8.3" fill="none" stroke="#381805" stroke-width="1.5"/></g><g transform="translate(951,485.2) rotate(-5)"><ellipse rx="7.3" ry="10.2" fill="#5f300c"/><path d="M0.5,-8.3 Q-0.9,0 0.3,8.3" fill="none" stroke="#381805" stroke-width="1.5"/></g><g transform="translate(966.7,500.4) rotate(10)"><ellipse rx="7.3" ry="10.2" fill="#5f300c"/><path d="M0.5,-8.3 Q-0.9,0 0.3,8.3" fill="none" stroke="#381805" stroke-width="1.5"/></g><g transform="translate(834,520.6) rotate(-5)"><ellipse rx="7.3" ry="10.2" fill="#5f300c"/><path d="M0.5,-8.3 Q-0.9,0 0.3,8.3" fill="none" stroke="#381805" stroke-width="1.5"/></g><g transform="translate(849.6,536.25) rotate(12)"><ellipse rx="7.3" ry="10.2" fill="#5f300c"/><path d="M0.5,-8.3 Q-0.9,0 0.3,8.3" fill="none" stroke="#381805" stroke-width="1.5"/></g><g transform="translate(800,543) rotate(-5)"><ellipse rx="7.3" ry="10.2" fill="#5f300c"/><path d="M0.5,-8.3 Q-0.9,0 0.3,8.3" fill="none" stroke="#381805" stroke-width="1.5"/></g><g transform="translate(815.6,558.75) rotate(10)"><ellipse rx="7.3" ry="10.2" fill="#5f300c"/><path d="M0.5,-8.3 Q-0.9,0 0.3,8.3" fill="none" stroke="#381805" stroke-width="1.5"/></g><g transform="translate(933,534.2) rotate(-5)"><ellipse rx="7.3" ry="10.2" fill="#5f300c"/><path d="M0.5,-8.3 Q-0.9,0 0.3,8.3" fill="none" stroke="#381805" stroke-width="1.5"/></g><g transform="translate(950,550.4) rotate(8)"><ellipse rx="7.3" ry="10.2" fill="#5f300c"/><path d="M0.5,-8.3 Q-0.9,0 0.3,8.3" fill="none" stroke="#381805" stroke-width="1.5"/></g><g transform="translate(991.25,545.2) rotate(-15)"><ellipse rx="7.3" ry="10.2" fill="#5f300c"/><path d="M0.5,-8.3 Q-0.9,0 0.3,8.3" fill="none" stroke="#381805" stroke-width="1.5"/></g><g transform="translate(1009.4,557.7) rotate(-3)"><ellipse rx="7.3" ry="10.2" fill="#5f300c"/><path d="M0.5,-8.3 Q-0.9,0 0.3,8.3" fill="none" stroke="#381805" stroke-width="1.5"/></g><g transform="translate(899,570.5) rotate(10)"><ellipse rx="7.3" ry="10.2" fill="#5f300c"/><path d="M0.5,-8.3 Q-0.9,0 0.3,8.3" fill="none" stroke="#381805" stroke-width="1.5"/></g><g transform="translate(908.3,590.2) rotate(35)"><ellipse rx="7.3" ry="10.2" fill="#5f300c"/><path d="M0.5,-8.3 Q-0.9,0 0.3,8.3" fill="none" stroke="#381805" stroke-width="1.5"/></g><g transform="translate(847.3,595.4) rotate(-30)"><ellipse rx="7.3" ry="10.2" fill="#5f300c"/><path d="M0.5,-8.3 Q-0.9,0 0.3,8.3" fill="none" stroke="#381805" stroke-width="1.5"/></g><g transform="translate(868.75,601.7) rotate(-10)"><ellipse rx="7.3" ry="10.2" fill="#5f300c"/><path d="M0.5,-8.3 Q-0.9,0 0.3,8.3" fill="none" stroke="#381805" stroke-width="1.5"/></g><g transform="translate(570.2,616.9) rotate(40)"><ellipse rx="7.3" ry="10.2" fill="#5f300c"/><path d="M0.5,-8.3 Q-0.9,0 0.3,8.3" fill="none" stroke="#381805" stroke-width="1.5"/></g><g transform="translate(610,615.2) rotate(40)"><ellipse rx="7.3" ry="10.2" fill="#5f300c"/><path d="M0.5,-8.3 Q-0.9,0 0.3,8.3" fill="none" stroke="#381805" stroke-width="1.5"/></g><g transform="translate(614.2,639.4) rotate(-35)"><ellipse rx="7.3" ry="10.2" fill="#5f300c"/><path d="M0.5,-8.3 Q-0.9,0 0.3,8.3" fill="none" stroke="#381805" stroke-width="1.5"/></g><g transform="translate(635.8,644.4) rotate(-15)"><ellipse rx="7.3" ry="10.2" fill="#5f300c"/><path d="M0.5,-8.3 Q-0.9,0 0.3,8.3" fill="none" stroke="#381805" stroke-width="1.5"/></g><g transform="translate(575.6,655) rotate(-25)"><ellipse rx="7.3" ry="10.2" fill="#5f300c"/><path d="M0.5,-8.3 Q-0.9,0 0.3,8.3" fill="none" stroke="#381805" stroke-width="1.5"/></g><g transform="translate(595.2,665.4) rotate(-5)"><ellipse rx="7.3" ry="10.2" fill="#5f300c"/><path d="M0.5,-8.3 Q-0.9,0 0.3,8.3" fill="none" stroke="#381805" stroke-width="1.5"/></g><g transform="translate(705.4,634.2) rotate(-55)"><ellipse rx="7.3" ry="10.2" fill="#5f300c"/><path d="M0.5,-8.3 Q-0.9,0 0.3,8.3" fill="none" stroke="#381805" stroke-width="1.5"/></g><g transform="translate(727.7,635) rotate(-25)"><ellipse rx="7.3" ry="10.2" fill="#5f300c"/><path d="M0.5,-8.3 Q-0.9,0 0.3,8.3" fill="none" stroke="#381805" stroke-width="1.5"/></g><g transform="translate(781.5,655) rotate(-40)"><ellipse rx="7.3" ry="10.2" fill="#5f300c"/><path d="M0.5,-8.3 Q-0.9,0 0.3,8.3" fill="none" stroke="#381805" stroke-width="1.5"/></g><g transform="translate(674,674.6) rotate(-20)"><ellipse rx="7.3" ry="10.2" fill="#5f300c"/><path d="M0.5,-8.3 Q-0.9,0 0.3,8.3" fill="none" stroke="#381805" stroke-width="1.5"/></g><g transform="translate(691.7,687) rotate(5)"><ellipse rx="7.3" ry="10.2" fill="#5f300c"/><path d="M0.5,-8.3 Q-0.9,0 0.3,8.3" fill="none" stroke="#381805" stroke-width="1.5"/></g><g transform="translate(753,681.9) rotate(-15)"><ellipse rx="7.3" ry="10.2" fill="#5f300c"/><path d="M0.5,-8.3 Q-0.9,0 0.3,8.3" fill="none" stroke="#381805" stroke-width="1.5"/></g><g transform="translate(771.25,694.4) rotate(5)"><ellipse rx="7.3" ry="10.2" fill="#5f300c"/><path d="M0.5,-8.3 Q-0.9,0 0.3,8.3" fill="none" stroke="#381805" stroke-width="1.5"/></g><g transform="translate(834.4,624.2) rotate(50)"><ellipse rx="7.3" ry="10.2" fill="#5f300c"/><path d="M0.5,-8.3 Q-0.9,0 0.3,8.3" fill="none" stroke="#381805" stroke-width="1.5"/></g><g transform="translate(832.5,646.5) rotate(63)"><ellipse rx="7.3" ry="10.2" fill="#5f300c"/><path d="M0.5,-8.3 Q-0.9,0 0.3,8.3" fill="none" stroke="#381805" stroke-width="1.5"/></g><g transform="translate(802.5,660) rotate(-12)"><ellipse rx="7.3" ry="10.2" fill="#5f300c"/><path d="M0.5,-8.3 Q-0.9,0 0.3,8.3" fill="none" stroke="#381805" stroke-width="1.5"/></g><g transform="translate(918,634.2) rotate(-8)"><ellipse rx="7.3" ry="10.2" fill="#5f300c"/><path d="M0.5,-8.3 Q-0.9,0 0.3,8.3" fill="none" stroke="#381805" stroke-width="1.5"/></g><g transform="translate(933.75,649.8) rotate(10)"><ellipse rx="7.3" ry="10.2" fill="#5f300c"/><path d="M0.5,-8.3 Q-0.9,0 0.3,8.3" fill="none" stroke="#381805" stroke-width="1.5"/></g><g transform="translate(979.2,611) rotate(5)"><ellipse rx="7.3" ry="10.2" fill="#5f300c"/><path d="M0.5,-8.3 Q-0.9,0 0.3,8.3" fill="none" stroke="#381805" stroke-width="1.5"/></g><g transform="translate(990,630.4) rotate(30)"><ellipse rx="7.3" ry="10.2" fill="#5f300c"/><path d="M0.5,-8.3 Q-0.9,0 0.3,8.3" fill="none" stroke="#381805" stroke-width="1.5"/></g><g transform="translate(883,670) rotate(-10)"><ellipse rx="7.3" ry="10.2" fill="#5f300c"/><path d="M0.5,-8.3 Q-0.9,0 0.3,8.3" fill="none" stroke="#381805" stroke-width="1.5"/></g><g transform="translate(899.4,685.6) rotate(15)"><ellipse rx="7.3" ry="10.2" fill="#5f300c"/><path d="M0.5,-8.3 Q-0.9,0 0.3,8.3" fill="none" stroke="#381805" stroke-width="1.5"/></g></g><g clip-path="url(#ct)"><g transform="translate(36,181) scale(0.2976) translate(-532,-310)"><g transform="translate(549.6,351.5) rotate(-18)"><ellipse rx="7.3" ry="10.2" fill="#4a2508"/><path d="M0.5,-8.3 Q-0.9,0 0.3,8.3" fill="none" stroke="#4a2508" stroke-width="1.5"/></g><g transform="translate(567.7,364) rotate(5)"><ellipse rx="7.3" ry="10.2" fill="#4a2508"/><path d="M0.5,-8.3 Q-0.9,0 0.3,8.3" fill="none" stroke="#4a2508" stroke-width="1.5"/></g><g transform="translate(627.7,338.8) rotate(-62)"><ellipse rx="7.3" ry="10.2" fill="#4a2508"/><path d="M0.5,-8.3 Q-0.9,0 0.3,8.3" fill="none" stroke="#4a2508" stroke-width="1.5"/></g><g transform="translate(649.6,340.6) rotate(-37)"><ellipse rx="7.3" ry="10.2" fill="#4a2508"/><path d="M0.5,-8.3 Q-0.9,0 0.3,8.3" fill="none" stroke="#4a2508" stroke-width="1.5"/></g><g transform="translate(611.5,364) rotate(-8)"><ellipse rx="7.3" ry="10.2" fill="#4a2508"/><path d="M0.5,-8.3 Q-0.9,0 0.3,8.3" fill="none" stroke="#4a2508" stroke-width="1.5"/></g><g transform="translate(627.5,379.6) rotate(12)"><ellipse rx="7.3" ry="10.2" fill="#4a2508"/><path d="M0.5,-8.3 Q-0.9,0 0.3,8.3" fill="none" stroke="#4a2508" stroke-width="1.5"/></g><g transform="translate(717.3,334.4) rotate(-8)"><ellipse rx="7.3" ry="10.2" fill="#4a2508"/><path d="M0.5,-8.3 Q-0.9,0 0.3,8.3" fill="none" stroke="#4a2508" stroke-width="1.5"/></g><g transform="translate(733.3,349.6) rotate(12)"><ellipse rx="7.3" ry="10.2" fill="#4a2508"/><path d="M0.5,-8.3 Q-0.9,0 0.3,8.3" fill="none" stroke="#4a2508" stroke-width="1.5"/></g><g transform="translate(678.5,363) rotate(-8)"><ellipse rx="7.3" ry="10.2" fill="#4a2508"/><path d="M0.5,-8.3 Q-0.9,0 0.3,8.3" fill="none" stroke="#4a2508" stroke-width="1.5"/></g><g transform="translate(694.4,378.5) rotate(12)"><ellipse rx="7.3" ry="10.2" fill="#4a2508"/><path d="M0.5,-8.3 Q-0.9,0 0.3,8.3" fill="none" stroke="#4a2508" stroke-width="1.5"/></g><g transform="translate(753.75,388) rotate(-3)"><ellipse rx="7.3" ry="10.2" fill="#4a2508"/><path d="M0.5,-8.3 Q-0.9,0 0.3,8.3" fill="none" stroke="#4a2508" stroke-width="1.5"/></g><g transform="translate(765.6,406.7) rotate(25)"><ellipse rx="7.3" ry="10.2" fill="#4a2508"/><path d="M0.5,-8.3 Q-0.9,0 0.3,8.3" fill="none" stroke="#4a2508" stroke-width="1.5"/></g><g transform="translate(551.5,407) rotate(8)"><ellipse rx="7.3" ry="10.2" fill="#4a2508"/><path d="M0.5,-8.3 Q-0.9,0 0.3,8.3" fill="none" stroke="#4a2508" stroke-width="1.5"/></g><g transform="translate(561.9,427) rotate(30)"><ellipse rx="7.3" ry="10.2" fill="#4a2508"/><path d="M0.5,-8.3 Q-0.9,0 0.3,8.3" fill="none" stroke="#4a2508" stroke-width="1.5"/></g><g transform="translate(585.4,428.5) rotate(-10)"><ellipse rx="7.3" ry="10.2" fill="#4a2508"/><path d="M0.5,-8.3 Q-0.9,0 0.3,8.3" fill="none" stroke="#4a2508" stroke-width="1.5"/></g><g transform="translate(601.5,444) rotate(12)"><ellipse rx="7.3" ry="10.2" fill="#4a2508"/><path d="M0.5,-8.3 Q-0.9,0 0.3,8.3" fill="none" stroke="#4a2508" stroke-width="1.5"/></g><g transform="translate(649.4,413) rotate(-10)"><ellipse rx="7.3" ry="10.2" fill="#4a2508"/><path d="M0.5,-8.3 Q-0.9,0 0.3,8.3" fill="none" stroke="#4a2508" stroke-width="1.5"/></g><g transform="translate(665.6,428.5) rotate(10)"><ellipse rx="7.3" ry="10.2" fill="#4a2508"/><path d="M0.5,-8.3 Q-0.9,0 0.3,8.3" fill="none" stroke="#4a2508" stroke-width="1.5"/></g><g transform="translate(712,428) rotate(-35)"><ellipse rx="7.3" ry="10.2" fill="#4a2508"/><path d="M0.5,-8.3 Q-0.9,0 0.3,8.3" fill="none" stroke="#4a2508" stroke-width="1.5"/></g><g transform="translate(733.3,434.6) rotate(-10)"><ellipse rx="7.3" ry="10.2" fill="#4a2508"/><path d="M0.5,-8.3 Q-0.9,0 0.3,8.3" fill="none" stroke="#4a2508" stroke-width="1.5"/></g><g transform="translate(786.5,343.3) rotate(-5)"><ellipse rx="7.3" ry="10.2" fill="#4a2508"/><path d="M0.5,-8.3 Q-0.9,0 0.3,8.3" fill="none" stroke="#4a2508" stroke-width="1.5"/></g><g transform="translate(802.5,359.4) rotate(10)"><ellipse rx="7.3" ry="10.2" fill="#4a2508"/><path d="M0.5,-8.3 Q-0.9,0 0.3,8.3" fill="none" stroke="#4a2508" stroke-width="1.5"/></g><g transform="translate(834.8,352.5) rotate(-20)"><ellipse rx="7.3" ry="10.2" fill="#4a2508"/><path d="M0.5,-8.3 Q-0.9,0 0.3,8.3" fill="none" stroke="#4a2508" stroke-width="1.5"/></g><g transform="translate(854.8,362) rotate(-5)"><ellipse rx="7.3" ry="10.2" fill="#4a2508"/><path d="M0.5,-8.3 Q-0.9,0 0.3,8.3" fill="none" stroke="#4a2508" stroke-width="1.5"/></g><g transform="translate(897.5,361.5) rotate(-5)"><ellipse rx="7.3" ry="10.2" fill="#4a2508"/><path d="M0.5,-8.3 Q-0.9,0 0.3,8.3" fill="none" stroke="#4a2508" stroke-width="1.5"/></g><g transform="translate(913.3,377.5) rotate(12)"><ellipse rx="7.3" ry="10.2" fill="#4a2508"/><path d="M0.5,-8.3 Q-0.9,0 0.3,8.3" fill="none" stroke="#4a2508" stroke-width="1.5"/></g><g transform="translate(939.6,364.8) rotate(-50)"><ellipse rx="7.3" ry="10.2" fill="#4a2508"/><path d="M0.5,-8.3 Q-0.9,0 0.3,8.3" fill="none" stroke="#4a2508" stroke-width="1.5"/></g><g transform="translate(961.6,366.3) rotate(-33)"><ellipse rx="7.3" ry="10.2" fill="#4a2508"/><path d="M0.5,-8.3 Q-0.9,0 0.3,8.3" fill="none" stroke="#4a2508" stroke-width="1.5"/></g><g transform="translate(983.3,349.4) rotate(-5)"><ellipse rx="7.3" ry="10.2" fill="#4a2508"/><path d="M0.5,-8.3 Q-0.9,0 0.3,8.3" fill="none" stroke="#4a2508" stroke-width="1.5"/></g><g transform="translate(999.4,364.6) rotate(10)"><ellipse rx="7.3" ry="10.2" fill="#4a2508"/><path d="M0.5,-8.3 Q-0.9,0 0.3,8.3" fill="none" stroke="#4a2508" stroke-width="1.5"/></g><g transform="translate(844.6,391.25) rotate(15)"><ellipse rx="7.3" ry="10.2" fill="#4a2508"/><path d="M0.5,-8.3 Q-0.9,0 0.3,8.3" fill="none" stroke="#4a2508" stroke-width="1.5"/></g><g transform="translate(852,412) rotate(40)"><ellipse rx="7.3" ry="10.2" fill="#4a2508"/><path d="M0.5,-8.3 Q-0.9,0 0.3,8.3" fill="none" stroke="#4a2508" stroke-width="1.5"/></g><g transform="translate(946.5,412) rotate(-8)"><ellipse rx="7.3" ry="10.2" fill="#4a2508"/><path d="M0.5,-8.3 Q-0.9,0 0.3,8.3" fill="none" stroke="#4a2508" stroke-width="1.5"/></g><g transform="translate(962.5,427.5) rotate(10)"><ellipse rx="7.3" ry="10.2" fill="#4a2508"/><path d="M0.5,-8.3 Q-0.9,0 0.3,8.3" fill="none" stroke="#4a2508" stroke-width="1.5"/></g><g transform="translate(914.6,432.7) rotate(-61)"><ellipse rx="7.3" ry="10.2" fill="#4a2508"/><path d="M0.5,-8.3 Q-0.9,0 0.3,8.3" fill="none" stroke="#4a2508" stroke-width="1.5"/></g><g transform="translate(895.4,443.75) rotate(-84)"><ellipse rx="7.3" ry="10.2" fill="#4a2508"/><path d="M0.5,-8.3 Q-0.9,0 0.3,8.3" fill="none" stroke="#4a2508" stroke-width="1.5"/></g><g transform="translate(564,477) rotate(-5)"><ellipse rx="7.3" ry="10.2" fill="#4a2508"/><path d="M0.5,-8.3 Q-0.9,0 0.3,8.3" fill="none" stroke="#4a2508" stroke-width="1.5"/></g><g transform="translate(579.6,492.5) rotate(10)"><ellipse rx="7.3" ry="10.2" fill="#4a2508"/><path d="M0.5,-8.3 Q-0.9,0 0.3,8.3" fill="none" stroke="#4a2508" stroke-width="1.5"/></g><g transform="translate(628.75,485.8) rotate(35)"><ellipse rx="7.3" ry="10.2" fill="#4a2508"/><path d="M0.5,-8.3 Q-0.9,0 0.3,8.3" fill="none" stroke="#4a2508" stroke-width="1.5"/></g><g transform="translate(629.8,508) rotate(58)"><ellipse rx="7.3" ry="10.2" fill="#4a2508"/><path d="M0.5,-8.3 Q-0.9,0 0.3,8.3" fill="none" stroke="#4a2508" stroke-width="1.5"/></g><g transform="translate(683.3,463.3) rotate(-10)"><ellipse rx="7.3" ry="10.2" fill="#4a2508"/><path d="M0.5,-8.3 Q-0.9,0 0.3,8.3" fill="none" stroke="#4a2508" stroke-width="1.5"/></g><g transform="translate(699.4,478.5) rotate(10)"><ellipse rx="7.3" ry="10.2" fill="#4a2508"/><path d="M0.5,-8.3 Q-0.9,0 0.3,8.3" fill="none" stroke="#4a2508" stroke-width="1.5"/></g><g transform="translate(758.75,481.7) rotate(-35)"><ellipse rx="7.3" ry="10.2" fill="#4a2508"/><path d="M0.5,-8.3 Q-0.9,0 0.3,8.3" fill="none" stroke="#4a2508" stroke-width="1.5"/></g><g transform="translate(779,488.4) rotate(-15)"><ellipse rx="7.3" ry="10.2" fill="#4a2508"/><path d="M0.5,-8.3 Q-0.9,0 0.3,8.3" fill="none" stroke="#4a2508" stroke-width="1.5"/></g><g transform="translate(743.1,523.3) rotate(-8)"><ellipse rx="7.3" ry="10.2" fill="#4a2508"/><path d="M0.5,-8.3 Q-0.9,0 0.3,8.3" fill="none" stroke="#4a2508" stroke-width="1.5"/></g><g transform="translate(759.4,538.5) rotate(10)"><ellipse rx="7.3" ry="10.2" fill="#4a2508"/><path d="M0.5,-8.3 Q-0.9,0 0.3,8.3" fill="none" stroke="#4a2508" stroke-width="1.5"/></g><g transform="translate(611.7,539.4) rotate(-61)"><ellipse rx="7.3" ry="10.2" fill="#4a2508"/><path d="M0.5,-8.3 Q-0.9,0 0.3,8.3" fill="none" stroke="#4a2508" stroke-width="1.5"/></g><g transform="translate(634,539.6) rotate(-25)"><ellipse rx="7.3" ry="10.2" fill="#4a2508"/><path d="M0.5,-8.3 Q-0.9,0 0.3,8.3" fill="none" stroke="#4a2508" stroke-width="1.5"/></g><g transform="translate(670.8,535.2) rotate(-25)"><ellipse rx="7.3" ry="10.2" fill="#4a2508"/><path d="M0.5,-8.3 Q-0.9,0 0.3,8.3" fill="none" stroke="#4a2508" stroke-width="1.5"/></g><g transform="translate(691.25,543.5) rotate(-5)"><ellipse rx="7.3" ry="10.2" fill="#4a2508"/><path d="M0.5,-8.3 Q-0.9,0 0.3,8.3" fill="none" stroke="#4a2508" stroke-width="1.5"/></g><g transform="translate(562.5,557.3) rotate(-8)"><ellipse rx="7.3" ry="10.2" fill="#4a2508"/><path d="M0.5,-8.3 Q-0.9,0 0.3,8.3" fill="none" stroke="#4a2508" stroke-width="1.5"/></g><g transform="translate(578.5,573.3) rotate(12)"><ellipse rx="7.3" ry="10.2" fill="#4a2508"/><path d="M0.5,-8.3 Q-0.9,0 0.3,8.3" fill="none" stroke="#4a2508" stroke-width="1.5"/></g><g transform="translate(655.4,570.2) rotate(-8)"><ellipse rx="7.3" ry="10.2" fill="#4a2508"/><path d="M0.5,-8.3 Q-0.9,0 0.3,8.3" fill="none" stroke="#4a2508" stroke-width="1.5"/></g><g transform="translate(671.5,585.5) rotate(10)"><ellipse rx="7.3" ry="10.2" fill="#4a2508"/><path d="M0.5,-8.3 Q-0.9,0 0.3,8.3" fill="none" stroke="#4a2508" stroke-width="1.5"/></g><g transform="translate(696.25,586.5) rotate(-5)"><ellipse rx="7.3" ry="10.2" fill="#4a2508"/><path d="M0.5,-8.3 Q-0.9,0 0.3,8.3" fill="none" stroke="#4a2508" stroke-width="1.5"/></g><g transform="translate(754.2,577.7) rotate(-8)"><ellipse rx="7.3" ry="10.2" fill="#4a2508"/><path d="M0.5,-8.3 Q-0.9,0 0.3,8.3" fill="none" stroke="#4a2508" stroke-width="1.5"/></g><g transform="translate(770.5,593) rotate(12)"><ellipse rx="7.3" ry="10.2" fill="#4a2508"/><path d="M0.5,-8.3 Q-0.9,0 0.3,8.3" fill="none" stroke="#4a2508" stroke-width="1.5"/></g><g transform="translate(563.5,596) rotate(15)"><ellipse rx="7.3" ry="10.2" fill="#4a2508"/><path d="M0.5,-8.3 Q-0.9,0 0.3,8.3" fill="none" stroke="#4a2508" stroke-width="1.5"/></g><g transform="translate(604.2,594) rotate(15)"><ellipse rx="7.3" ry="10.2" fill="#4a2508"/><path d="M0.5,-8.3 Q-0.9,0 0.3,8.3" fill="none" stroke="#4a2508" stroke-width="1.5"/></g><g transform="translate(711.8,601.5) rotate(10)"><ellipse rx="7.3" ry="10.2" fill="#4a2508"/><path d="M0.5,-8.3 Q-0.9,0 0.3,8.3" fill="none" stroke="#4a2508" stroke-width="1.5"/></g><g transform="translate(825.4,452.5) rotate(-5)"><ellipse rx="7.3" ry="10.2" fill="#4a2508"/><path d="M0.5,-8.3 Q-0.9,0 0.3,8.3" fill="none" stroke="#4a2508" stroke-width="1.5"/></g><g transform="translate(841.25,468) rotate(10)"><ellipse rx="7.3" ry="10.2" fill="#4a2508"/><path d="M0.5,-8.3 Q-0.9,0 0.3,8.3" fill="none" stroke="#4a2508" stroke-width="1.5"/></g><g transform="translate(866.25,462.3) rotate(-5)"><ellipse rx="7.3" ry="10.2" fill="#4a2508"/><path d="M0.5,-8.3 Q-0.9,0 0.3,8.3" fill="none" stroke="#4a2508" stroke-width="1.5"/></g><g transform="translate(882.3,478) rotate(10)"><ellipse rx="7.3" ry="10.2" fill="#4a2508"/><path d="M0.5,-8.3 Q-0.9,0 0.3,8.3" fill="none" stroke="#4a2508" stroke-width="1.5"/></g><g transform="translate(981.25,452.5) rotate(-10)"><ellipse rx="7.3" ry="10.2" fill="#4a2508"/><path d="M0.5,-8.3 Q-0.9,0 0.3,8.3" fill="none" stroke="#4a2508" stroke-width="1.5"/></g><g transform="translate(997.5,468) rotate(10)"><ellipse rx="7.3" ry="10.2" fill="#4a2508"/><path d="M0.5,-8.3 Q-0.9,0 0.3,8.3" fill="none" stroke="#4a2508" stroke-width="1.5"/></g><g transform="translate(951,485.2) rotate(-5)"><ellipse rx="7.3" ry="10.2" fill="#4a2508"/><path d="M0.5,-8.3 Q-0.9,0 0.3,8.3" fill="none" stroke="#4a2508" stroke-width="1.5"/></g><g transform="translate(966.7,500.4) rotate(10)"><ellipse rx="7.3" ry="10.2" fill="#4a2508"/><path d="M0.5,-8.3 Q-0.9,0 0.3,8.3" fill="none" stroke="#4a2508" stroke-width="1.5"/></g><g transform="translate(834,520.6) rotate(-5)"><ellipse rx="7.3" ry="10.2" fill="#4a2508"/><path d="M0.5,-8.3 Q-0.9,0 0.3,8.3" fill="none" stroke="#4a2508" stroke-width="1.5"/></g><g transform="translate(849.6,536.25) rotate(12)"><ellipse rx="7.3" ry="10.2" fill="#4a2508"/><path d="M0.5,-8.3 Q-0.9,0 0.3,8.3" fill="none" stroke="#4a2508" stroke-width="1.5"/></g><g transform="translate(800,543) rotate(-5)"><ellipse rx="7.3" ry="10.2" fill="#4a2508"/><path d="M0.5,-8.3 Q-0.9,0 0.3,8.3" fill="none" stroke="#4a2508" stroke-width="1.5"/></g><g transform="translate(815.6,558.75) rotate(10)"><ellipse rx="7.3" ry="10.2" fill="#4a2508"/><path d="M0.5,-8.3 Q-0.9,0 0.3,8.3" fill="none" stroke="#4a2508" stroke-width="1.5"/></g><g transform="translate(933,534.2) rotate(-5)"><ellipse rx="7.3" ry="10.2" fill="#4a2508"/><path d="M0.5,-8.3 Q-0.9,0 0.3,8.3" fill="none" stroke="#4a2508" stroke-width="1.5"/></g><g transform="translate(950,550.4) rotate(8)"><ellipse rx="7.3" ry="10.2" fill="#4a2508"/><path d="M0.5,-8.3 Q-0.9,0 0.3,8.3" fill="none" stroke="#4a2508" stroke-width="1.5"/></g><g transform="translate(991.25,545.2) rotate(-15)"><ellipse rx="7.3" ry="10.2" fill="#4a2508"/><path d="M0.5,-8.3 Q-0.9,0 0.3,8.3" fill="none" stroke="#4a2508" stroke-width="1.5"/></g><g transform="translate(1009.4,557.7) rotate(-3)"><ellipse rx="7.3" ry="10.2" fill="#4a2508"/><path d="M0.5,-8.3 Q-0.9,0 0.3,8.3" fill="none" stroke="#4a2508" stroke-width="1.5"/></g><g transform="translate(899,570.5) rotate(10)"><ellipse rx="7.3" ry="10.2" fill="#4a2508"/><path d="M0.5,-8.3 Q-0.9,0 0.3,8.3" fill="none" stroke="#4a2508" stroke-width="1.5"/></g><g transform="translate(908.3,590.2) rotate(35)"><ellipse rx="7.3" ry="10.2" fill="#4a2508"/><path d="M0.5,-8.3 Q-0.9,0 0.3,8.3" fill="none" stroke="#4a2508" stroke-width="1.5"/></g><g transform="translate(847.3,595.4) rotate(-30)"><ellipse rx="7.3" ry="10.2" fill="#4a2508"/><path d="M0.5,-8.3 Q-0.9,0 0.3,8.3" fill="none" stroke="#4a2508" stroke-width="1.5"/></g><g transform="translate(868.75,601.7) rotate(-10)"><ellipse rx="7.3" ry="10.2" fill="#4a2508"/><path d="M0.5,-8.3 Q-0.9,0 0.3,8.3" fill="none" stroke="#4a2508" stroke-width="1.5"/></g><g transform="translate(570.2,616.9) rotate(40)"><ellipse rx="7.3" ry="10.2" fill="#4a2508"/><path d="M0.5,-8.3 Q-0.9,0 0.3,8.3" fill="none" stroke="#4a2508" stroke-width="1.5"/></g><g transform="translate(610,615.2) rotate(40)"><ellipse rx="7.3" ry="10.2" fill="#4a2508"/><path d="M0.5,-8.3 Q-0.9,0 0.3,8.3" fill="none" stroke="#4a2508" stroke-width="1.5"/></g><g transform="translate(614.2,639.4) rotate(-35)"><ellipse rx="7.3" ry="10.2" fill="#4a2508"/><path d="M0.5,-8.3 Q-0.9,0 0.3,8.3" fill="none" stroke="#4a2508" stroke-width="1.5"/></g><g transform="translate(635.8,644.4) rotate(-15)"><ellipse rx="7.3" ry="10.2" fill="#4a2508"/><path d="M0.5,-8.3 Q-0.9,0 0.3,8.3" fill="none" stroke="#4a2508" stroke-width="1.5"/></g><g transform="translate(575.6,655) rotate(-25)"><ellipse rx="7.3" ry="10.2" fill="#4a2508"/><path d="M0.5,-8.3 Q-0.9,0 0.3,8.3" fill="none" stroke="#4a2508" stroke-width="1.5"/></g><g transform="translate(595.2,665.4) rotate(-5)"><ellipse rx="7.3" ry="10.2" fill="#4a2508"/><path d="M0.5,-8.3 Q-0.9,0 0.3,8.3" fill="none" stroke="#4a2508" stroke-width="1.5"/></g><g transform="translate(705.4,634.2) rotate(-55)"><ellipse rx="7.3" ry="10.2" fill="#4a2508"/><path d="M0.5,-8.3 Q-0.9,0 0.3,8.3" fill="none" stroke="#4a2508" stroke-width="1.5"/></g><g transform="translate(727.7,635) rotate(-25)"><ellipse rx="7.3" ry="10.2" fill="#4a2508"/><path d="M0.5,-8.3 Q-0.9,0 0.3,8.3" fill="none" stroke="#4a2508" stroke-width="1.5"/></g><g transform="translate(781.5,655) rotate(-40)"><ellipse rx="7.3" ry="10.2" fill="#4a2508"/><path d="M0.5,-8.3 Q-0.9,0 0.3,8.3" fill="none" stroke="#4a2508" stroke-width="1.5"/></g><g transform="translate(674,674.6) rotate(-20)"><ellipse rx="7.3" ry="10.2" fill="#4a2508"/><path d="M0.5,-8.3 Q-0.9,0 0.3,8.3" fill="none" stroke="#4a2508" stroke-width="1.5"/></g><g transform="translate(691.7,687) rotate(5)"><ellipse rx="7.3" ry="10.2" fill="#4a2508"/><path d="M0.5,-8.3 Q-0.9,0 0.3,8.3" fill="none" stroke="#4a2508" stroke-width="1.5"/></g><g transform="translate(753,681.9) rotate(-15)"><ellipse rx="7.3" ry="10.2" fill="#4a2508"/><path d="M0.5,-8.3 Q-0.9,0 0.3,8.3" fill="none" stroke="#4a2508" stroke-width="1.5"/></g><g transform="translate(771.25,694.4) rotate(5)"><ellipse rx="7.3" ry="10.2" fill="#4a2508"/><path d="M0.5,-8.3 Q-0.9,0 0.3,8.3" fill="none" stroke="#4a2508" stroke-width="1.5"/></g><g transform="translate(834.4,624.2) rotate(50)"><ellipse rx="7.3" ry="10.2" fill="#4a2508"/><path d="M0.5,-8.3 Q-0.9,0 0.3,8.3" fill="none" stroke="#4a2508" stroke-width="1.5"/></g><g transform="translate(832.5,646.5) rotate(63)"><ellipse rx="7.3" ry="10.2" fill="#4a2508"/><path d="M0.5,-8.3 Q-0.9,0 0.3,8.3" fill="none" stroke="#4a2508" stroke-width="1.5"/></g><g transform="translate(802.5,660) rotate(-12)"><ellipse rx="7.3" ry="10.2" fill="#4a2508"/><path d="M0.5,-8.3 Q-0.9,0 0.3,8.3" fill="none" stroke="#4a2508" stroke-width="1.5"/></g><g transform="translate(918,634.2) rotate(-8)"><ellipse rx="7.3" ry="10.2" fill="#4a2508"/><path d="M0.5,-8.3 Q-0.9,0 0.3,8.3" fill="none" stroke="#4a2508" stroke-width="1.5"/></g><g transform="translate(933.75,649.8) rotate(10)"><ellipse rx="7.3" ry="10.2" fill="#4a2508"/><path d="M0.5,-8.3 Q-0.9,0 0.3,8.3" fill="none" stroke="#4a2508" stroke-width="1.5"/></g><g transform="translate(979.2,611) rotate(5)"><ellipse rx="7.3" ry="10.2" fill="#4a2508"/><path d="M0.5,-8.3 Q-0.9,0 0.3,8.3" fill="none" stroke="#4a2508" stroke-width="1.5"/></g><g transform="translate(990,630.4) rotate(30)"><ellipse rx="7.3" ry="10.2" fill="#4a2508"/><path d="M0.5,-8.3 Q-0.9,0 0.3,8.3" fill="none" stroke="#4a2508" stroke-width="1.5"/></g><g transform="translate(883,670) rotate(-10)"><ellipse rx="7.3" ry="10.2" fill="#4a2508"/><path d="M0.5,-8.3 Q-0.9,0 0.3,8.3" fill="none" stroke="#4a2508" stroke-width="1.5"/></g><g transform="translate(899.4,685.6) rotate(15)"><ellipse rx="7.3" ry="10.2" fill="#4a2508"/><path d="M0.5,-8.3 Q-0.9,0 0.3,8.3" fill="none" stroke="#4a2508" stroke-width="1.5"/></g></g></g>
</svg>
<div class="t" style="left:259px;top:9.92px;font-size:12.5px;line-height:12.5px;font-weight:400;color:#ffffff;transform:scaleX(0.9426);transform-origin:0 0;">Презентация1&nbsp; -&nbsp; PowerPoint</div><div class="t" style="left:557.5px;top:11.42px;font-size:12.5px;line-height:12.5px;font-weight:400;color:#ffffff;transform:scaleX(0.9931);transform-origin:0 0;">Поиск</div><div class="t" style="left:1135.6px;top:10.42px;font-size:12.5px;line-height:12.5px;font-weight:400;color:#1a1a1a;transform:scaleX(0.8946);transform-origin:0 0;">Вход</div><div class="t" style="left:15.9px;top:42.80px;font-size:13px;line-height:13px;font-weight:400;color:#ffffff;transform:scaleX(0.8915);transform-origin:0 0;">Файл</div><div class="t" style="left:74px;top:42.80px;font-size:13px;line-height:13px;font-weight:700;color:#ffffff;transform:scaleX(0.9835);transform-origin:0 0;">Главная</div><div class="t" style="left:155px;top:42.80px;font-size:13px;line-height:13px;font-weight:400;color:#ffffff;transform:scaleX(0.9249);transform-origin:0 0;">Вставка</div><div class="t" style="left:231px;top:42.80px;font-size:13px;line-height:13px;font-weight:400;color:#ffffff;transform:scaleX(1.0037);transform-origin:0 0;">Конструктор</div><div class="t" style="left:337.7px;top:42.80px;font-size:13px;line-height:13px;font-weight:400;color:#ffffff;transform:scaleX(1.0052);transform-origin:0 0;">Переходы</div><div class="t" style="left:432.2px;top:42.80px;font-size:13px;line-height:13px;font-weight:400;color:#ffffff;transform:scaleX(0.9536);transform-origin:0 0;">Анимация</div><div class="t" style="left:523.5px;top:42.80px;font-size:13px;line-height:13px;font-weight:400;color:#ffffff;transform:scaleX(0.9658);transform-origin:0 0;">Слайд-шоу</div><div class="t" style="left:621px;top:42.80px;font-size:13px;line-height:13px;font-weight:400;color:#ffffff;transform:scaleX(0.9822);transform-origin:0 0;">Рецензирование</div><div class="t" style="left:752.3px;top:42.80px;font-size:13px;line-height:13px;font-weight:400;color:#ffffff;transform:scaleX(0.8754);transform-origin:0 0;">Вид</div><div class="t" style="left:802.6px;top:42.80px;font-size:13px;line-height:13px;font-weight:400;color:#ffffff;transform:scaleX(0.9541);transform-origin:0 0;">Запись</div><div class="t" style="left:873px;top:42.80px;font-size:13px;line-height:13px;font-weight:400;color:#ffffff;transform:scaleX(0.9706);transform-origin:0 0;">Справка</div><div class="t" style="left:1270px;top:42.52px;font-size:13.8px;line-height:13.8px;font-weight:700;color:#ffffff;transform:scaleX(0.8936);transform-origin:0 0;">Поделиться</div><div class="t" style="left:6.5px;top:146.69px;font-size:11px;line-height:11px;font-weight:400;color:#ececec;transform:scaleX(1.0140);transform-origin:0 0;">Буфер обмена</div><div class="t" style="left:170px;top:146.69px;font-size:11px;line-height:11px;font-weight:400;color:#ececec;transform:scaleX(0.9645);transform-origin:0 0;">Слайды</div><div class="t" style="left:394.4px;top:146.69px;font-size:11px;line-height:11px;font-weight:400;color:#ececec;transform:scaleX(1.0662);transform-origin:0 0;">Шрифт</div><div class="t" style="left:653.6px;top:146.69px;font-size:11px;line-height:11px;font-weight:400;color:#ececec;transform:scaleX(1.0143);transform-origin:0 0;">Абзац</div><div class="t" style="left:965.3px;top:146.69px;font-size:11px;line-height:11px;font-weight:400;color:#ececec;transform:scaleX(1.0179);transform-origin:0 0;">Рисование</div><div class="t" style="left:1231.5px;top:146.69px;font-size:11px;line-height:11px;font-weight:400;color:#ececec;transform:scaleX(1.0358);transform-origin:0 0;">Редактирование</div><div class="t" style="left:10.4px;top:107.81px;font-size:11.8px;line-height:11.8px;font-weight:400;color:#f0f0f0;transform:scaleX(0.9517);transform-origin:0 0;">Вставить</div><div class="t" style="left:117px;top:107.67px;font-size:12.2px;line-height:12.2px;font-weight:400;color:#f0f0f0;transform:scaleX(0.9282);transform-origin:0 0;">Создать</div><div class="t" style="left:117.2px;top:122.87px;font-size:12.2px;line-height:12.2px;font-weight:400;color:#f0f0f0;transform:scaleX(0.9438);transform-origin:0 0;">слайд</div><div class="t" style="left:185.5px;top:74.71px;font-size:11.8px;line-height:11.8px;font-weight:400;color:#f0f0f0;transform:scaleX(1.0033);transform-origin:0 0;">Макет</div><div class="t" style="left:185.5px;top:98.71px;font-size:11.8px;line-height:11.8px;font-weight:400;color:#f0f0f0;transform:scaleX(0.9861);transform-origin:0 0;">Восстановить</div><div class="t" style="left:185.5px;top:123.51px;font-size:11.8px;line-height:11.8px;font-weight:400;color:#f0f0f0;transform:scaleX(0.9308);transform-origin:0 0;">Раздел</div><div class="t" style="left:440.5px;top:82.77px;font-size:11.5px;line-height:11.5px;font-weight:400;color:#5e5e5e;transform:scaleX(0.9768);transform-origin:0 0;">60</div><div class="t" style="left:938px;top:108.21px;font-size:11.8px;line-height:11.8px;font-weight:400;color:#f0f0f0;transform:scaleX(1.0227);transform-origin:0 0;">Упорядочить</div><div class="t" style="left:1014.7px;top:108.71px;font-size:11.8px;line-height:11.8px;font-weight:400;color:#707070;transform:scaleX(1.0163);transform-origin:0 0;">Экспресс-</div><div class="t" style="left:1022.5px;top:124.21px;font-size:11.8px;line-height:11.8px;font-weight:400;color:#707070;transform:scaleX(0.9976);transform-origin:0 0;">стили</div><div class="t" style="left:1096px;top:74.21px;font-size:11.8px;line-height:11.8px;font-weight:400;color:#707070;transform:scaleX(1.0622);transform-origin:0 0;">Заливка фигуры</div><div class="t" style="left:1096px;top:97.21px;font-size:11.8px;line-height:11.8px;font-weight:400;color:#707070;transform:scaleX(1.0327);transform-origin:0 0;">Контур фигуры</div><div class="t" style="left:1096px;top:120.21px;font-size:11.8px;line-height:11.8px;font-weight:400;color:#707070;transform:scaleX(0.9805);transform-origin:0 0;">Эффекты фигуры</div><div class="t" style="left:1249.3px;top:74.21px;font-size:11.8px;line-height:11.8px;font-weight:400;color:#f0f0f0;transform:scaleX(0.9800);transform-origin:0 0;">Найти</div><div class="t" style="left:1249.3px;top:97.21px;font-size:11.8px;line-height:11.8px;font-weight:400;color:#f0f0f0;transform:scaleX(0.9922);transform-origin:0 0;">Заменить</div><div class="t" style="left:1249.3px;top:120.21px;font-size:11.8px;line-height:11.8px;font-weight:400;color:#f0f0f0;transform:scaleX(0.9662);transform-origin:0 0;">Выделить</div><div class="t" style="left:8.2px;top:751.27px;font-size:11.5px;line-height:11.5px;font-weight:400;color:#e6e6e6;transform:scaleX(0.9472);transform-origin:0 0;">Слайд 1 из 5</div><div class="t" style="left:123.2px;top:751.27px;font-size:11.5px;line-height:11.5px;font-weight:400;color:#e6e6e6;transform:scaleX(1.0053);transform-origin:0 0;">русский</div><div class="t" style="left:829.7px;top:751.57px;font-size:11.5px;line-height:11.5px;font-weight:400;color:#e6e6e6;transform:scaleX(0.9981);transform-origin:0 0;">Заметки</div><div class="t" style="left:911px;top:751.57px;font-size:11.5px;line-height:11.5px;font-weight:400;color:#e6e6e6;transform:scaleX(1.0376);transform-origin:0 0;">Примечания</div><div class="t" style="left:1304px;top:750.67px;font-size:11.5px;line-height:11.5px;font-weight:400;color:#e6e6e6;transform:scaleX(0.8887);transform-origin:0 0;">39 %</div><div class="t" style="left:11.3px;top:177.25px;font-size:15.3px;line-height:15.3px;font-weight:400;color:#ececec;transform:scaleX(0.9394);transform-origin:0 0;">1</div><div class="t" style="left:11.3px;top:282.25px;font-size:15.3px;line-height:15.3px;font-weight:400;color:#ececec;transform:scaleX(0.9394);transform-origin:0 0;">2</div><div class="t" style="left:11.3px;top:387.25px;font-size:15.3px;line-height:15.3px;font-weight:400;color:#ececec;transform:scaleX(0.9394);transform-origin:0 0;">3</div><div class="t" style="left:11.3px;top:492.25px;font-size:15.3px;line-height:15.3px;font-weight:400;color:#ececec;transform:scaleX(0.9394);transform-origin:0 0;">4</div><div class="t" style="left:11.3px;top:597.25px;font-size:15.3px;line-height:15.3px;font-weight:400;color:#ececec;transform:scaleX(0.9394);transform-origin:0 0;">5</div>
</body></html>
